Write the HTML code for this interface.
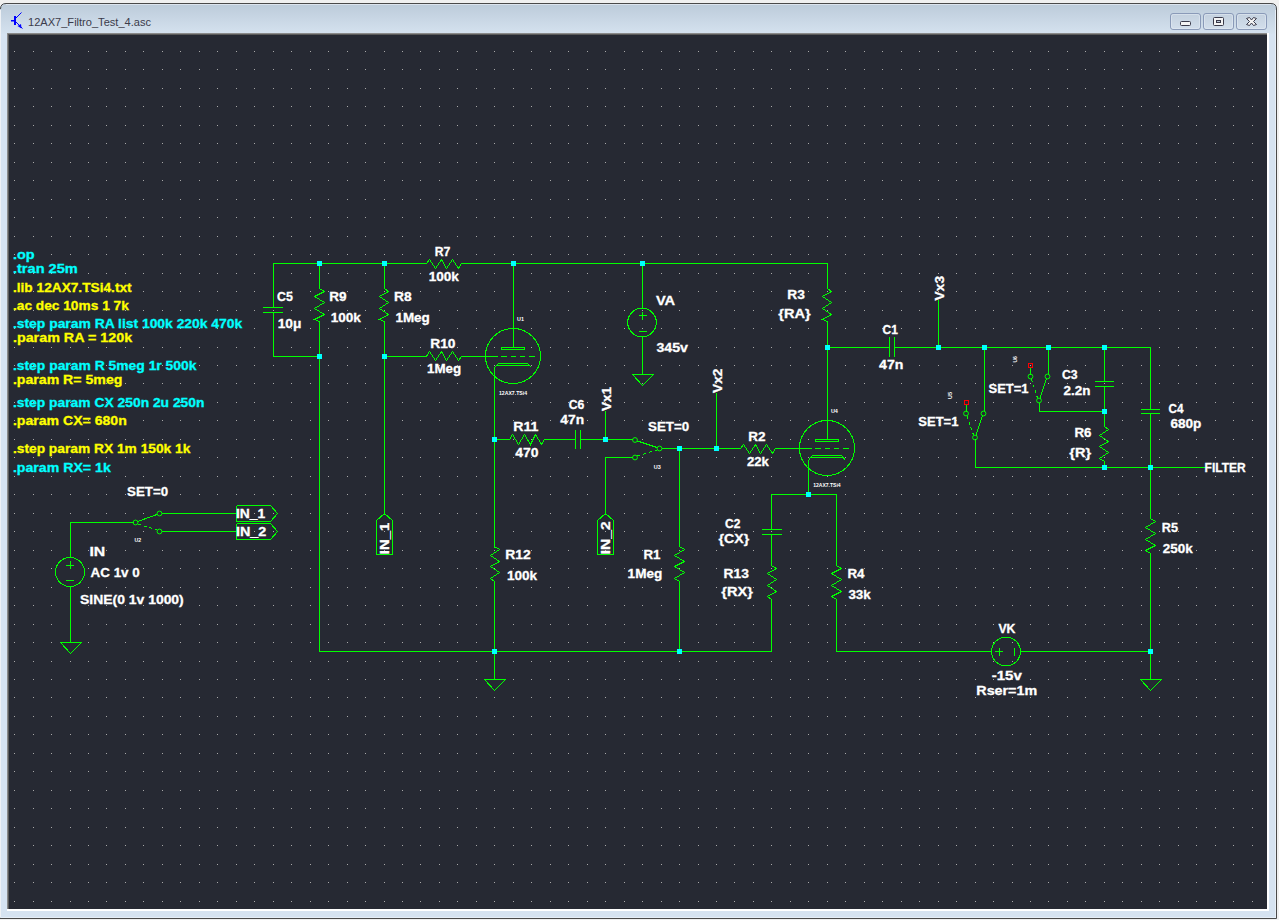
<!DOCTYPE html>
<html><head><meta charset="utf-8"><title>12AX7_Filtro_Test_4.asc</title><style>html,body{margin:0;padding:0;width:1279px;height:920px;overflow:hidden;background:#f0f0f0}</style></head><body>
<svg width="1279" height="920" viewBox="0 0 1279 920" style="position:absolute;left:0;top:0">
<defs><linearGradient id="tb" x1="0" y1="0" x2="0" y2="1"><stop offset="0" stop-color="#bccbda"/><stop offset="1" stop-color="#d5e2ef"/></linearGradient><linearGradient id="bt" x1="0" y1="0" x2="0" y2="1"><stop offset="0" stop-color="#c3d0de"/><stop offset="1" stop-color="#d3dfec"/></linearGradient></defs>
<rect x="0" y="0" width="1279" height="920" fill="#f0f0f0"/>
<path d="M0,9 Q0,3 6,3 L1271,3 Q1277,3 1277,9 L1277,919 L0,919 Z" fill="#d6e3f1"/>
<path d="M0,10 Q1,4 7,4 L1270,4 Q1276,4 1276,10 L1276,34 L0,34 Z" fill="url(#tb)"/>
<rect x="6" y="4" width="1265" height="1" fill="#dce4ee"/>
<rect x="1275" y="10" width="1" height="908" fill="#e6eef7"/>
<rect x="1" y="917" width="1274" height="1" fill="#e6eef7"/>
<rect x="0" y="10" width="1" height="907" fill="#eef1f5"/>
<path d="M0.5,9 Q0.5,3.5 6,3.5 L1271,3.5 Q1276.5,3.5 1276.5,9 L1276.5,918.5 L0,918.5" fill="none" stroke="#4a4a4a" stroke-width="1"/>
<rect x="7" y="33" width="1262" height="878" fill="#ffffff"/>
<rect x="7" y="33" width="1260" height="876" fill="#8a8a8a"/>
<rect x="8" y="34" width="1259" height="875" fill="#5a5a5a"/>
<rect x="9" y="35" width="1258" height="874" fill="#262933"/>
<text x="28" y="26" font-family="Liberation Sans" font-size="11.3" fill="#3b3b4b" textLength="123" lengthAdjust="spacingAndGlyphs">12AX7_Filtro_Test_4.asc</text>
<g fill="#0000ff" stroke="none"><rect x="11" y="20" width="3" height="1.5"/><rect x="14" y="16" width="2" height="9"/></g>
<g stroke="#0000ff" stroke-width="1" fill="none"><path d="M16,18 L21.5,12.5"/><path d="M16,22 L22.5,28.5"/></g>
<path d="M17.5,26 L21,24 L21.5,28.5 Z" fill="#0000ff"/>
<rect x="1170.5" y="13.5" width="30" height="16" rx="2.5" fill="url(#bt)" stroke="#8a9ab8" stroke-width="1"/>
<rect x="1171.5" y="14.5" width="28" height="14" rx="2" fill="none" stroke="#e4ecf5" stroke-width="0.8" opacity="0.7"/>
<rect x="1203.5" y="13.5" width="30" height="16" rx="2.5" fill="url(#bt)" stroke="#8a9ab8" stroke-width="1"/>
<rect x="1204.5" y="14.5" width="28" height="14" rx="2" fill="none" stroke="#e4ecf5" stroke-width="0.8" opacity="0.7"/>
<rect x="1236.5" y="13.5" width="30" height="16" rx="2.5" fill="url(#bt)" stroke="#8a9ab8" stroke-width="1"/>
<rect x="1237.5" y="14.5" width="28" height="14" rx="2" fill="none" stroke="#e4ecf5" stroke-width="0.8" opacity="0.7"/>
<rect x="1180.5" y="21.5" width="10" height="4" rx="1" fill="#f4f4f4" stroke="#3a3a4a" stroke-width="1"/>
<rect x="1213.5" y="17.5" width="10" height="8" rx="1" fill="#f4f4f4" stroke="#3a3a4a" stroke-width="1"/><rect x="1216" y="20" width="5" height="3" fill="#3a3a4a"/><rect x="1217" y="21" width="3" height="1" fill="#bcc8d8"/>
<path d="M1246.5,18.5 L1249.5,17.5 L1251.5,20 L1253.5,17.5 L1256.5,18.5 L1253.5,21.5 L1256.5,24.5 L1253.5,25.5 L1251.5,23 L1249.5,25.5 L1246.5,24.5 L1249.5,21.5 Z" fill="#f4f4f4" stroke="#3a3a4a" stroke-width="1" stroke-linejoin="round"/>
<path d="M14 51h1v1h-1zM14 69h1v1h-1zM14 88h1v1h-1zM14 106h1v1h-1zM14 125h1v1h-1zM14 143h1v1h-1zM14 162h1v1h-1zM14 180h1v1h-1zM14 199h1v1h-1zM14 217h1v1h-1zM14 236h1v1h-1zM14 254h1v1h-1zM14 273h1v1h-1zM14 291h1v1h-1zM14 310h1v1h-1zM14 328h1v1h-1zM14 347h1v1h-1zM14 365h1v1h-1zM14 383h1v1h-1zM14 402h1v1h-1zM14 420h1v1h-1zM14 439h1v1h-1zM14 457h1v1h-1zM14 476h1v1h-1zM14 494h1v1h-1zM14 513h1v1h-1zM14 531h1v1h-1zM14 550h1v1h-1zM14 568h1v1h-1zM14 587h1v1h-1zM14 605h1v1h-1zM14 624h1v1h-1zM14 642h1v1h-1zM14 661h1v1h-1zM14 679h1v1h-1zM14 697h1v1h-1zM14 716h1v1h-1zM14 734h1v1h-1zM14 753h1v1h-1zM14 771h1v1h-1zM14 790h1v1h-1zM14 808h1v1h-1zM14 827h1v1h-1zM14 845h1v1h-1zM14 864h1v1h-1zM14 882h1v1h-1zM14 901h1v1h-1zM33 51h1v1h-1zM33 69h1v1h-1zM33 88h1v1h-1zM33 106h1v1h-1zM33 125h1v1h-1zM33 143h1v1h-1zM33 162h1v1h-1zM33 180h1v1h-1zM33 199h1v1h-1zM33 217h1v1h-1zM33 236h1v1h-1zM33 254h1v1h-1zM33 273h1v1h-1zM33 291h1v1h-1zM33 310h1v1h-1zM33 328h1v1h-1zM33 347h1v1h-1zM33 365h1v1h-1zM33 383h1v1h-1zM33 402h1v1h-1zM33 420h1v1h-1zM33 439h1v1h-1zM33 457h1v1h-1zM33 476h1v1h-1zM33 494h1v1h-1zM33 513h1v1h-1zM33 531h1v1h-1zM33 550h1v1h-1zM33 568h1v1h-1zM33 587h1v1h-1zM33 605h1v1h-1zM33 624h1v1h-1zM33 642h1v1h-1zM33 661h1v1h-1zM33 679h1v1h-1zM33 697h1v1h-1zM33 716h1v1h-1zM33 734h1v1h-1zM33 753h1v1h-1zM33 771h1v1h-1zM33 790h1v1h-1zM33 808h1v1h-1zM33 827h1v1h-1zM33 845h1v1h-1zM33 864h1v1h-1zM33 882h1v1h-1zM33 901h1v1h-1zM51 51h1v1h-1zM51 69h1v1h-1zM51 88h1v1h-1zM51 106h1v1h-1zM51 125h1v1h-1zM51 143h1v1h-1zM51 162h1v1h-1zM51 180h1v1h-1zM51 199h1v1h-1zM51 217h1v1h-1zM51 236h1v1h-1zM51 254h1v1h-1zM51 273h1v1h-1zM51 291h1v1h-1zM51 310h1v1h-1zM51 328h1v1h-1zM51 347h1v1h-1zM51 365h1v1h-1zM51 383h1v1h-1zM51 402h1v1h-1zM51 420h1v1h-1zM51 439h1v1h-1zM51 457h1v1h-1zM51 476h1v1h-1zM51 494h1v1h-1zM51 513h1v1h-1zM51 531h1v1h-1zM51 550h1v1h-1zM51 568h1v1h-1zM51 587h1v1h-1zM51 605h1v1h-1zM51 624h1v1h-1zM51 642h1v1h-1zM51 661h1v1h-1zM51 679h1v1h-1zM51 697h1v1h-1zM51 716h1v1h-1zM51 734h1v1h-1zM51 753h1v1h-1zM51 771h1v1h-1zM51 790h1v1h-1zM51 808h1v1h-1zM51 827h1v1h-1zM51 845h1v1h-1zM51 864h1v1h-1zM51 882h1v1h-1zM51 901h1v1h-1zM70 51h1v1h-1zM70 69h1v1h-1zM70 88h1v1h-1zM70 106h1v1h-1zM70 125h1v1h-1zM70 143h1v1h-1zM70 162h1v1h-1zM70 180h1v1h-1zM70 199h1v1h-1zM70 217h1v1h-1zM70 236h1v1h-1zM70 254h1v1h-1zM70 273h1v1h-1zM70 291h1v1h-1zM70 310h1v1h-1zM70 328h1v1h-1zM70 347h1v1h-1zM70 365h1v1h-1zM70 383h1v1h-1zM70 402h1v1h-1zM70 420h1v1h-1zM70 439h1v1h-1zM70 457h1v1h-1zM70 476h1v1h-1zM70 494h1v1h-1zM70 513h1v1h-1zM70 531h1v1h-1zM70 550h1v1h-1zM70 568h1v1h-1zM70 587h1v1h-1zM70 605h1v1h-1zM70 624h1v1h-1zM70 642h1v1h-1zM70 661h1v1h-1zM70 679h1v1h-1zM70 697h1v1h-1zM70 716h1v1h-1zM70 734h1v1h-1zM70 753h1v1h-1zM70 771h1v1h-1zM70 790h1v1h-1zM70 808h1v1h-1zM70 827h1v1h-1zM70 845h1v1h-1zM70 864h1v1h-1zM70 882h1v1h-1zM70 901h1v1h-1zM88 51h1v1h-1zM88 69h1v1h-1zM88 88h1v1h-1zM88 106h1v1h-1zM88 125h1v1h-1zM88 143h1v1h-1zM88 162h1v1h-1zM88 180h1v1h-1zM88 199h1v1h-1zM88 217h1v1h-1zM88 236h1v1h-1zM88 254h1v1h-1zM88 273h1v1h-1zM88 291h1v1h-1zM88 310h1v1h-1zM88 328h1v1h-1zM88 347h1v1h-1zM88 365h1v1h-1zM88 383h1v1h-1zM88 402h1v1h-1zM88 420h1v1h-1zM88 439h1v1h-1zM88 457h1v1h-1zM88 476h1v1h-1zM88 494h1v1h-1zM88 513h1v1h-1zM88 531h1v1h-1zM88 550h1v1h-1zM88 568h1v1h-1zM88 587h1v1h-1zM88 605h1v1h-1zM88 624h1v1h-1zM88 642h1v1h-1zM88 661h1v1h-1zM88 679h1v1h-1zM88 697h1v1h-1zM88 716h1v1h-1zM88 734h1v1h-1zM88 753h1v1h-1zM88 771h1v1h-1zM88 790h1v1h-1zM88 808h1v1h-1zM88 827h1v1h-1zM88 845h1v1h-1zM88 864h1v1h-1zM88 882h1v1h-1zM88 901h1v1h-1zM106 51h1v1h-1zM106 69h1v1h-1zM106 88h1v1h-1zM106 106h1v1h-1zM106 125h1v1h-1zM106 143h1v1h-1zM106 162h1v1h-1zM106 180h1v1h-1zM106 199h1v1h-1zM106 217h1v1h-1zM106 236h1v1h-1zM106 254h1v1h-1zM106 273h1v1h-1zM106 291h1v1h-1zM106 310h1v1h-1zM106 328h1v1h-1zM106 347h1v1h-1zM106 365h1v1h-1zM106 383h1v1h-1zM106 402h1v1h-1zM106 420h1v1h-1zM106 439h1v1h-1zM106 457h1v1h-1zM106 476h1v1h-1zM106 494h1v1h-1zM106 513h1v1h-1zM106 531h1v1h-1zM106 550h1v1h-1zM106 568h1v1h-1zM106 587h1v1h-1zM106 605h1v1h-1zM106 624h1v1h-1zM106 642h1v1h-1zM106 661h1v1h-1zM106 679h1v1h-1zM106 697h1v1h-1zM106 716h1v1h-1zM106 734h1v1h-1zM106 753h1v1h-1zM106 771h1v1h-1zM106 790h1v1h-1zM106 808h1v1h-1zM106 827h1v1h-1zM106 845h1v1h-1zM106 864h1v1h-1zM106 882h1v1h-1zM106 901h1v1h-1zM125 51h1v1h-1zM125 69h1v1h-1zM125 88h1v1h-1zM125 106h1v1h-1zM125 125h1v1h-1zM125 143h1v1h-1zM125 162h1v1h-1zM125 180h1v1h-1zM125 199h1v1h-1zM125 217h1v1h-1zM125 236h1v1h-1zM125 254h1v1h-1zM125 273h1v1h-1zM125 291h1v1h-1zM125 310h1v1h-1zM125 328h1v1h-1zM125 347h1v1h-1zM125 365h1v1h-1zM125 383h1v1h-1zM125 402h1v1h-1zM125 420h1v1h-1zM125 439h1v1h-1zM125 457h1v1h-1zM125 476h1v1h-1zM125 494h1v1h-1zM125 513h1v1h-1zM125 531h1v1h-1zM125 550h1v1h-1zM125 568h1v1h-1zM125 587h1v1h-1zM125 605h1v1h-1zM125 624h1v1h-1zM125 642h1v1h-1zM125 661h1v1h-1zM125 679h1v1h-1zM125 697h1v1h-1zM125 716h1v1h-1zM125 734h1v1h-1zM125 753h1v1h-1zM125 771h1v1h-1zM125 790h1v1h-1zM125 808h1v1h-1zM125 827h1v1h-1zM125 845h1v1h-1zM125 864h1v1h-1zM125 882h1v1h-1zM125 901h1v1h-1zM143 51h1v1h-1zM143 69h1v1h-1zM143 88h1v1h-1zM143 106h1v1h-1zM143 125h1v1h-1zM143 143h1v1h-1zM143 162h1v1h-1zM143 180h1v1h-1zM143 199h1v1h-1zM143 217h1v1h-1zM143 236h1v1h-1zM143 254h1v1h-1zM143 273h1v1h-1zM143 291h1v1h-1zM143 310h1v1h-1zM143 328h1v1h-1zM143 347h1v1h-1zM143 365h1v1h-1zM143 383h1v1h-1zM143 402h1v1h-1zM143 420h1v1h-1zM143 439h1v1h-1zM143 457h1v1h-1zM143 476h1v1h-1zM143 494h1v1h-1zM143 513h1v1h-1zM143 531h1v1h-1zM143 550h1v1h-1zM143 568h1v1h-1zM143 587h1v1h-1zM143 605h1v1h-1zM143 624h1v1h-1zM143 642h1v1h-1zM143 661h1v1h-1zM143 679h1v1h-1zM143 697h1v1h-1zM143 716h1v1h-1zM143 734h1v1h-1zM143 753h1v1h-1zM143 771h1v1h-1zM143 790h1v1h-1zM143 808h1v1h-1zM143 827h1v1h-1zM143 845h1v1h-1zM143 864h1v1h-1zM143 882h1v1h-1zM143 901h1v1h-1zM162 51h1v1h-1zM162 69h1v1h-1zM162 88h1v1h-1zM162 106h1v1h-1zM162 125h1v1h-1zM162 143h1v1h-1zM162 162h1v1h-1zM162 180h1v1h-1zM162 199h1v1h-1zM162 217h1v1h-1zM162 236h1v1h-1zM162 254h1v1h-1zM162 273h1v1h-1zM162 291h1v1h-1zM162 310h1v1h-1zM162 328h1v1h-1zM162 347h1v1h-1zM162 365h1v1h-1zM162 383h1v1h-1zM162 402h1v1h-1zM162 420h1v1h-1zM162 439h1v1h-1zM162 457h1v1h-1zM162 476h1v1h-1zM162 494h1v1h-1zM162 513h1v1h-1zM162 531h1v1h-1zM162 550h1v1h-1zM162 568h1v1h-1zM162 587h1v1h-1zM162 605h1v1h-1zM162 624h1v1h-1zM162 642h1v1h-1zM162 661h1v1h-1zM162 679h1v1h-1zM162 697h1v1h-1zM162 716h1v1h-1zM162 734h1v1h-1zM162 753h1v1h-1zM162 771h1v1h-1zM162 790h1v1h-1zM162 808h1v1h-1zM162 827h1v1h-1zM162 845h1v1h-1zM162 864h1v1h-1zM162 882h1v1h-1zM162 901h1v1h-1zM180 51h1v1h-1zM180 69h1v1h-1zM180 88h1v1h-1zM180 106h1v1h-1zM180 125h1v1h-1zM180 143h1v1h-1zM180 162h1v1h-1zM180 180h1v1h-1zM180 199h1v1h-1zM180 217h1v1h-1zM180 236h1v1h-1zM180 254h1v1h-1zM180 273h1v1h-1zM180 291h1v1h-1zM180 310h1v1h-1zM180 328h1v1h-1zM180 347h1v1h-1zM180 365h1v1h-1zM180 383h1v1h-1zM180 402h1v1h-1zM180 420h1v1h-1zM180 439h1v1h-1zM180 457h1v1h-1zM180 476h1v1h-1zM180 494h1v1h-1zM180 513h1v1h-1zM180 531h1v1h-1zM180 550h1v1h-1zM180 568h1v1h-1zM180 587h1v1h-1zM180 605h1v1h-1zM180 624h1v1h-1zM180 642h1v1h-1zM180 661h1v1h-1zM180 679h1v1h-1zM180 697h1v1h-1zM180 716h1v1h-1zM180 734h1v1h-1zM180 753h1v1h-1zM180 771h1v1h-1zM180 790h1v1h-1zM180 808h1v1h-1zM180 827h1v1h-1zM180 845h1v1h-1zM180 864h1v1h-1zM180 882h1v1h-1zM180 901h1v1h-1zM199 51h1v1h-1zM199 69h1v1h-1zM199 88h1v1h-1zM199 106h1v1h-1zM199 125h1v1h-1zM199 143h1v1h-1zM199 162h1v1h-1zM199 180h1v1h-1zM199 199h1v1h-1zM199 217h1v1h-1zM199 236h1v1h-1zM199 254h1v1h-1zM199 273h1v1h-1zM199 291h1v1h-1zM199 310h1v1h-1zM199 328h1v1h-1zM199 347h1v1h-1zM199 365h1v1h-1zM199 383h1v1h-1zM199 402h1v1h-1zM199 420h1v1h-1zM199 439h1v1h-1zM199 457h1v1h-1zM199 476h1v1h-1zM199 494h1v1h-1zM199 513h1v1h-1zM199 531h1v1h-1zM199 550h1v1h-1zM199 568h1v1h-1zM199 587h1v1h-1zM199 605h1v1h-1zM199 624h1v1h-1zM199 642h1v1h-1zM199 661h1v1h-1zM199 679h1v1h-1zM199 697h1v1h-1zM199 716h1v1h-1zM199 734h1v1h-1zM199 753h1v1h-1zM199 771h1v1h-1zM199 790h1v1h-1zM199 808h1v1h-1zM199 827h1v1h-1zM199 845h1v1h-1zM199 864h1v1h-1zM199 882h1v1h-1zM199 901h1v1h-1zM217 51h1v1h-1zM217 69h1v1h-1zM217 88h1v1h-1zM217 106h1v1h-1zM217 125h1v1h-1zM217 143h1v1h-1zM217 162h1v1h-1zM217 180h1v1h-1zM217 199h1v1h-1zM217 217h1v1h-1zM217 236h1v1h-1zM217 254h1v1h-1zM217 273h1v1h-1zM217 291h1v1h-1zM217 310h1v1h-1zM217 328h1v1h-1zM217 347h1v1h-1zM217 365h1v1h-1zM217 383h1v1h-1zM217 402h1v1h-1zM217 420h1v1h-1zM217 439h1v1h-1zM217 457h1v1h-1zM217 476h1v1h-1zM217 494h1v1h-1zM217 513h1v1h-1zM217 531h1v1h-1zM217 550h1v1h-1zM217 568h1v1h-1zM217 587h1v1h-1zM217 605h1v1h-1zM217 624h1v1h-1zM217 642h1v1h-1zM217 661h1v1h-1zM217 679h1v1h-1zM217 697h1v1h-1zM217 716h1v1h-1zM217 734h1v1h-1zM217 753h1v1h-1zM217 771h1v1h-1zM217 790h1v1h-1zM217 808h1v1h-1zM217 827h1v1h-1zM217 845h1v1h-1zM217 864h1v1h-1zM217 882h1v1h-1zM217 901h1v1h-1zM236 51h1v1h-1zM236 69h1v1h-1zM236 88h1v1h-1zM236 106h1v1h-1zM236 125h1v1h-1zM236 143h1v1h-1zM236 162h1v1h-1zM236 180h1v1h-1zM236 199h1v1h-1zM236 217h1v1h-1zM236 236h1v1h-1zM236 254h1v1h-1zM236 273h1v1h-1zM236 291h1v1h-1zM236 310h1v1h-1zM236 328h1v1h-1zM236 347h1v1h-1zM236 365h1v1h-1zM236 383h1v1h-1zM236 402h1v1h-1zM236 420h1v1h-1zM236 439h1v1h-1zM236 457h1v1h-1zM236 476h1v1h-1zM236 494h1v1h-1zM236 513h1v1h-1zM236 531h1v1h-1zM236 550h1v1h-1zM236 568h1v1h-1zM236 587h1v1h-1zM236 605h1v1h-1zM236 624h1v1h-1zM236 642h1v1h-1zM236 661h1v1h-1zM236 679h1v1h-1zM236 697h1v1h-1zM236 716h1v1h-1zM236 734h1v1h-1zM236 753h1v1h-1zM236 771h1v1h-1zM236 790h1v1h-1zM236 808h1v1h-1zM236 827h1v1h-1zM236 845h1v1h-1zM236 864h1v1h-1zM236 882h1v1h-1zM236 901h1v1h-1zM254 51h1v1h-1zM254 69h1v1h-1zM254 88h1v1h-1zM254 106h1v1h-1zM254 125h1v1h-1zM254 143h1v1h-1zM254 162h1v1h-1zM254 180h1v1h-1zM254 199h1v1h-1zM254 217h1v1h-1zM254 236h1v1h-1zM254 254h1v1h-1zM254 273h1v1h-1zM254 291h1v1h-1zM254 310h1v1h-1zM254 328h1v1h-1zM254 347h1v1h-1zM254 365h1v1h-1zM254 383h1v1h-1zM254 402h1v1h-1zM254 420h1v1h-1zM254 439h1v1h-1zM254 457h1v1h-1zM254 476h1v1h-1zM254 494h1v1h-1zM254 513h1v1h-1zM254 531h1v1h-1zM254 550h1v1h-1zM254 568h1v1h-1zM254 587h1v1h-1zM254 605h1v1h-1zM254 624h1v1h-1zM254 642h1v1h-1zM254 661h1v1h-1zM254 679h1v1h-1zM254 697h1v1h-1zM254 716h1v1h-1zM254 734h1v1h-1zM254 753h1v1h-1zM254 771h1v1h-1zM254 790h1v1h-1zM254 808h1v1h-1zM254 827h1v1h-1zM254 845h1v1h-1zM254 864h1v1h-1zM254 882h1v1h-1zM254 901h1v1h-1zM273 51h1v1h-1zM273 69h1v1h-1zM273 88h1v1h-1zM273 106h1v1h-1zM273 125h1v1h-1zM273 143h1v1h-1zM273 162h1v1h-1zM273 180h1v1h-1zM273 199h1v1h-1zM273 217h1v1h-1zM273 236h1v1h-1zM273 254h1v1h-1zM273 273h1v1h-1zM273 291h1v1h-1zM273 310h1v1h-1zM273 328h1v1h-1zM273 347h1v1h-1zM273 365h1v1h-1zM273 383h1v1h-1zM273 402h1v1h-1zM273 420h1v1h-1zM273 439h1v1h-1zM273 457h1v1h-1zM273 476h1v1h-1zM273 494h1v1h-1zM273 513h1v1h-1zM273 531h1v1h-1zM273 550h1v1h-1zM273 568h1v1h-1zM273 587h1v1h-1zM273 605h1v1h-1zM273 624h1v1h-1zM273 642h1v1h-1zM273 661h1v1h-1zM273 679h1v1h-1zM273 697h1v1h-1zM273 716h1v1h-1zM273 734h1v1h-1zM273 753h1v1h-1zM273 771h1v1h-1zM273 790h1v1h-1zM273 808h1v1h-1zM273 827h1v1h-1zM273 845h1v1h-1zM273 864h1v1h-1zM273 882h1v1h-1zM273 901h1v1h-1zM291 51h1v1h-1zM291 69h1v1h-1zM291 88h1v1h-1zM291 106h1v1h-1zM291 125h1v1h-1zM291 143h1v1h-1zM291 162h1v1h-1zM291 180h1v1h-1zM291 199h1v1h-1zM291 217h1v1h-1zM291 236h1v1h-1zM291 254h1v1h-1zM291 273h1v1h-1zM291 291h1v1h-1zM291 310h1v1h-1zM291 328h1v1h-1zM291 347h1v1h-1zM291 365h1v1h-1zM291 383h1v1h-1zM291 402h1v1h-1zM291 420h1v1h-1zM291 439h1v1h-1zM291 457h1v1h-1zM291 476h1v1h-1zM291 494h1v1h-1zM291 513h1v1h-1zM291 531h1v1h-1zM291 550h1v1h-1zM291 568h1v1h-1zM291 587h1v1h-1zM291 605h1v1h-1zM291 624h1v1h-1zM291 642h1v1h-1zM291 661h1v1h-1zM291 679h1v1h-1zM291 697h1v1h-1zM291 716h1v1h-1zM291 734h1v1h-1zM291 753h1v1h-1zM291 771h1v1h-1zM291 790h1v1h-1zM291 808h1v1h-1zM291 827h1v1h-1zM291 845h1v1h-1zM291 864h1v1h-1zM291 882h1v1h-1zM291 901h1v1h-1zM310 51h1v1h-1zM310 69h1v1h-1zM310 88h1v1h-1zM310 106h1v1h-1zM310 125h1v1h-1zM310 143h1v1h-1zM310 162h1v1h-1zM310 180h1v1h-1zM310 199h1v1h-1zM310 217h1v1h-1zM310 236h1v1h-1zM310 254h1v1h-1zM310 273h1v1h-1zM310 291h1v1h-1zM310 310h1v1h-1zM310 328h1v1h-1zM310 347h1v1h-1zM310 365h1v1h-1zM310 383h1v1h-1zM310 402h1v1h-1zM310 420h1v1h-1zM310 439h1v1h-1zM310 457h1v1h-1zM310 476h1v1h-1zM310 494h1v1h-1zM310 513h1v1h-1zM310 531h1v1h-1zM310 550h1v1h-1zM310 568h1v1h-1zM310 587h1v1h-1zM310 605h1v1h-1zM310 624h1v1h-1zM310 642h1v1h-1zM310 661h1v1h-1zM310 679h1v1h-1zM310 697h1v1h-1zM310 716h1v1h-1zM310 734h1v1h-1zM310 753h1v1h-1zM310 771h1v1h-1zM310 790h1v1h-1zM310 808h1v1h-1zM310 827h1v1h-1zM310 845h1v1h-1zM310 864h1v1h-1zM310 882h1v1h-1zM310 901h1v1h-1zM328 51h1v1h-1zM328 69h1v1h-1zM328 88h1v1h-1zM328 106h1v1h-1zM328 125h1v1h-1zM328 143h1v1h-1zM328 162h1v1h-1zM328 180h1v1h-1zM328 199h1v1h-1zM328 217h1v1h-1zM328 236h1v1h-1zM328 254h1v1h-1zM328 273h1v1h-1zM328 291h1v1h-1zM328 310h1v1h-1zM328 328h1v1h-1zM328 347h1v1h-1zM328 365h1v1h-1zM328 383h1v1h-1zM328 402h1v1h-1zM328 420h1v1h-1zM328 439h1v1h-1zM328 457h1v1h-1zM328 476h1v1h-1zM328 494h1v1h-1zM328 513h1v1h-1zM328 531h1v1h-1zM328 550h1v1h-1zM328 568h1v1h-1zM328 587h1v1h-1zM328 605h1v1h-1zM328 624h1v1h-1zM328 642h1v1h-1zM328 661h1v1h-1zM328 679h1v1h-1zM328 697h1v1h-1zM328 716h1v1h-1zM328 734h1v1h-1zM328 753h1v1h-1zM328 771h1v1h-1zM328 790h1v1h-1zM328 808h1v1h-1zM328 827h1v1h-1zM328 845h1v1h-1zM328 864h1v1h-1zM328 882h1v1h-1zM328 901h1v1h-1zM347 51h1v1h-1zM347 69h1v1h-1zM347 88h1v1h-1zM347 106h1v1h-1zM347 125h1v1h-1zM347 143h1v1h-1zM347 162h1v1h-1zM347 180h1v1h-1zM347 199h1v1h-1zM347 217h1v1h-1zM347 236h1v1h-1zM347 254h1v1h-1zM347 273h1v1h-1zM347 291h1v1h-1zM347 310h1v1h-1zM347 328h1v1h-1zM347 347h1v1h-1zM347 365h1v1h-1zM347 383h1v1h-1zM347 402h1v1h-1zM347 420h1v1h-1zM347 439h1v1h-1zM347 457h1v1h-1zM347 476h1v1h-1zM347 494h1v1h-1zM347 513h1v1h-1zM347 531h1v1h-1zM347 550h1v1h-1zM347 568h1v1h-1zM347 587h1v1h-1zM347 605h1v1h-1zM347 624h1v1h-1zM347 642h1v1h-1zM347 661h1v1h-1zM347 679h1v1h-1zM347 697h1v1h-1zM347 716h1v1h-1zM347 734h1v1h-1zM347 753h1v1h-1zM347 771h1v1h-1zM347 790h1v1h-1zM347 808h1v1h-1zM347 827h1v1h-1zM347 845h1v1h-1zM347 864h1v1h-1zM347 882h1v1h-1zM347 901h1v1h-1zM365 51h1v1h-1zM365 69h1v1h-1zM365 88h1v1h-1zM365 106h1v1h-1zM365 125h1v1h-1zM365 143h1v1h-1zM365 162h1v1h-1zM365 180h1v1h-1zM365 199h1v1h-1zM365 217h1v1h-1zM365 236h1v1h-1zM365 254h1v1h-1zM365 273h1v1h-1zM365 291h1v1h-1zM365 310h1v1h-1zM365 328h1v1h-1zM365 347h1v1h-1zM365 365h1v1h-1zM365 383h1v1h-1zM365 402h1v1h-1zM365 420h1v1h-1zM365 439h1v1h-1zM365 457h1v1h-1zM365 476h1v1h-1zM365 494h1v1h-1zM365 513h1v1h-1zM365 531h1v1h-1zM365 550h1v1h-1zM365 568h1v1h-1zM365 587h1v1h-1zM365 605h1v1h-1zM365 624h1v1h-1zM365 642h1v1h-1zM365 661h1v1h-1zM365 679h1v1h-1zM365 697h1v1h-1zM365 716h1v1h-1zM365 734h1v1h-1zM365 753h1v1h-1zM365 771h1v1h-1zM365 790h1v1h-1zM365 808h1v1h-1zM365 827h1v1h-1zM365 845h1v1h-1zM365 864h1v1h-1zM365 882h1v1h-1zM365 901h1v1h-1zM384 51h1v1h-1zM384 69h1v1h-1zM384 88h1v1h-1zM384 106h1v1h-1zM384 125h1v1h-1zM384 143h1v1h-1zM384 162h1v1h-1zM384 180h1v1h-1zM384 199h1v1h-1zM384 217h1v1h-1zM384 236h1v1h-1zM384 254h1v1h-1zM384 273h1v1h-1zM384 291h1v1h-1zM384 310h1v1h-1zM384 328h1v1h-1zM384 347h1v1h-1zM384 365h1v1h-1zM384 383h1v1h-1zM384 402h1v1h-1zM384 420h1v1h-1zM384 439h1v1h-1zM384 457h1v1h-1zM384 476h1v1h-1zM384 494h1v1h-1zM384 513h1v1h-1zM384 531h1v1h-1zM384 550h1v1h-1zM384 568h1v1h-1zM384 587h1v1h-1zM384 605h1v1h-1zM384 624h1v1h-1zM384 642h1v1h-1zM384 661h1v1h-1zM384 679h1v1h-1zM384 697h1v1h-1zM384 716h1v1h-1zM384 734h1v1h-1zM384 753h1v1h-1zM384 771h1v1h-1zM384 790h1v1h-1zM384 808h1v1h-1zM384 827h1v1h-1zM384 845h1v1h-1zM384 864h1v1h-1zM384 882h1v1h-1zM384 901h1v1h-1zM402 51h1v1h-1zM402 69h1v1h-1zM402 88h1v1h-1zM402 106h1v1h-1zM402 125h1v1h-1zM402 143h1v1h-1zM402 162h1v1h-1zM402 180h1v1h-1zM402 199h1v1h-1zM402 217h1v1h-1zM402 236h1v1h-1zM402 254h1v1h-1zM402 273h1v1h-1zM402 291h1v1h-1zM402 310h1v1h-1zM402 328h1v1h-1zM402 347h1v1h-1zM402 365h1v1h-1zM402 383h1v1h-1zM402 402h1v1h-1zM402 420h1v1h-1zM402 439h1v1h-1zM402 457h1v1h-1zM402 476h1v1h-1zM402 494h1v1h-1zM402 513h1v1h-1zM402 531h1v1h-1zM402 550h1v1h-1zM402 568h1v1h-1zM402 587h1v1h-1zM402 605h1v1h-1zM402 624h1v1h-1zM402 642h1v1h-1zM402 661h1v1h-1zM402 679h1v1h-1zM402 697h1v1h-1zM402 716h1v1h-1zM402 734h1v1h-1zM402 753h1v1h-1zM402 771h1v1h-1zM402 790h1v1h-1zM402 808h1v1h-1zM402 827h1v1h-1zM402 845h1v1h-1zM402 864h1v1h-1zM402 882h1v1h-1zM402 901h1v1h-1zM420 51h1v1h-1zM420 69h1v1h-1zM420 88h1v1h-1zM420 106h1v1h-1zM420 125h1v1h-1zM420 143h1v1h-1zM420 162h1v1h-1zM420 180h1v1h-1zM420 199h1v1h-1zM420 217h1v1h-1zM420 236h1v1h-1zM420 254h1v1h-1zM420 273h1v1h-1zM420 291h1v1h-1zM420 310h1v1h-1zM420 328h1v1h-1zM420 347h1v1h-1zM420 365h1v1h-1zM420 383h1v1h-1zM420 402h1v1h-1zM420 420h1v1h-1zM420 439h1v1h-1zM420 457h1v1h-1zM420 476h1v1h-1zM420 494h1v1h-1zM420 513h1v1h-1zM420 531h1v1h-1zM420 550h1v1h-1zM420 568h1v1h-1zM420 587h1v1h-1zM420 605h1v1h-1zM420 624h1v1h-1zM420 642h1v1h-1zM420 661h1v1h-1zM420 679h1v1h-1zM420 697h1v1h-1zM420 716h1v1h-1zM420 734h1v1h-1zM420 753h1v1h-1zM420 771h1v1h-1zM420 790h1v1h-1zM420 808h1v1h-1zM420 827h1v1h-1zM420 845h1v1h-1zM420 864h1v1h-1zM420 882h1v1h-1zM420 901h1v1h-1zM439 51h1v1h-1zM439 69h1v1h-1zM439 88h1v1h-1zM439 106h1v1h-1zM439 125h1v1h-1zM439 143h1v1h-1zM439 162h1v1h-1zM439 180h1v1h-1zM439 199h1v1h-1zM439 217h1v1h-1zM439 236h1v1h-1zM439 254h1v1h-1zM439 273h1v1h-1zM439 291h1v1h-1zM439 310h1v1h-1zM439 328h1v1h-1zM439 347h1v1h-1zM439 365h1v1h-1zM439 383h1v1h-1zM439 402h1v1h-1zM439 420h1v1h-1zM439 439h1v1h-1zM439 457h1v1h-1zM439 476h1v1h-1zM439 494h1v1h-1zM439 513h1v1h-1zM439 531h1v1h-1zM439 550h1v1h-1zM439 568h1v1h-1zM439 587h1v1h-1zM439 605h1v1h-1zM439 624h1v1h-1zM439 642h1v1h-1zM439 661h1v1h-1zM439 679h1v1h-1zM439 697h1v1h-1zM439 716h1v1h-1zM439 734h1v1h-1zM439 753h1v1h-1zM439 771h1v1h-1zM439 790h1v1h-1zM439 808h1v1h-1zM439 827h1v1h-1zM439 845h1v1h-1zM439 864h1v1h-1zM439 882h1v1h-1zM439 901h1v1h-1zM457 51h1v1h-1zM457 69h1v1h-1zM457 88h1v1h-1zM457 106h1v1h-1zM457 125h1v1h-1zM457 143h1v1h-1zM457 162h1v1h-1zM457 180h1v1h-1zM457 199h1v1h-1zM457 217h1v1h-1zM457 236h1v1h-1zM457 254h1v1h-1zM457 273h1v1h-1zM457 291h1v1h-1zM457 310h1v1h-1zM457 328h1v1h-1zM457 347h1v1h-1zM457 365h1v1h-1zM457 383h1v1h-1zM457 402h1v1h-1zM457 420h1v1h-1zM457 439h1v1h-1zM457 457h1v1h-1zM457 476h1v1h-1zM457 494h1v1h-1zM457 513h1v1h-1zM457 531h1v1h-1zM457 550h1v1h-1zM457 568h1v1h-1zM457 587h1v1h-1zM457 605h1v1h-1zM457 624h1v1h-1zM457 642h1v1h-1zM457 661h1v1h-1zM457 679h1v1h-1zM457 697h1v1h-1zM457 716h1v1h-1zM457 734h1v1h-1zM457 753h1v1h-1zM457 771h1v1h-1zM457 790h1v1h-1zM457 808h1v1h-1zM457 827h1v1h-1zM457 845h1v1h-1zM457 864h1v1h-1zM457 882h1v1h-1zM457 901h1v1h-1zM476 51h1v1h-1zM476 69h1v1h-1zM476 88h1v1h-1zM476 106h1v1h-1zM476 125h1v1h-1zM476 143h1v1h-1zM476 162h1v1h-1zM476 180h1v1h-1zM476 199h1v1h-1zM476 217h1v1h-1zM476 236h1v1h-1zM476 254h1v1h-1zM476 273h1v1h-1zM476 291h1v1h-1zM476 310h1v1h-1zM476 328h1v1h-1zM476 347h1v1h-1zM476 365h1v1h-1zM476 383h1v1h-1zM476 402h1v1h-1zM476 420h1v1h-1zM476 439h1v1h-1zM476 457h1v1h-1zM476 476h1v1h-1zM476 494h1v1h-1zM476 513h1v1h-1zM476 531h1v1h-1zM476 550h1v1h-1zM476 568h1v1h-1zM476 587h1v1h-1zM476 605h1v1h-1zM476 624h1v1h-1zM476 642h1v1h-1zM476 661h1v1h-1zM476 679h1v1h-1zM476 697h1v1h-1zM476 716h1v1h-1zM476 734h1v1h-1zM476 753h1v1h-1zM476 771h1v1h-1zM476 790h1v1h-1zM476 808h1v1h-1zM476 827h1v1h-1zM476 845h1v1h-1zM476 864h1v1h-1zM476 882h1v1h-1zM476 901h1v1h-1zM494 51h1v1h-1zM494 69h1v1h-1zM494 88h1v1h-1zM494 106h1v1h-1zM494 125h1v1h-1zM494 143h1v1h-1zM494 162h1v1h-1zM494 180h1v1h-1zM494 199h1v1h-1zM494 217h1v1h-1zM494 236h1v1h-1zM494 254h1v1h-1zM494 273h1v1h-1zM494 291h1v1h-1zM494 310h1v1h-1zM494 328h1v1h-1zM494 347h1v1h-1zM494 365h1v1h-1zM494 383h1v1h-1zM494 402h1v1h-1zM494 420h1v1h-1zM494 439h1v1h-1zM494 457h1v1h-1zM494 476h1v1h-1zM494 494h1v1h-1zM494 513h1v1h-1zM494 531h1v1h-1zM494 550h1v1h-1zM494 568h1v1h-1zM494 587h1v1h-1zM494 605h1v1h-1zM494 624h1v1h-1zM494 642h1v1h-1zM494 661h1v1h-1zM494 679h1v1h-1zM494 697h1v1h-1zM494 716h1v1h-1zM494 734h1v1h-1zM494 753h1v1h-1zM494 771h1v1h-1zM494 790h1v1h-1zM494 808h1v1h-1zM494 827h1v1h-1zM494 845h1v1h-1zM494 864h1v1h-1zM494 882h1v1h-1zM494 901h1v1h-1zM513 51h1v1h-1zM513 69h1v1h-1zM513 88h1v1h-1zM513 106h1v1h-1zM513 125h1v1h-1zM513 143h1v1h-1zM513 162h1v1h-1zM513 180h1v1h-1zM513 199h1v1h-1zM513 217h1v1h-1zM513 236h1v1h-1zM513 254h1v1h-1zM513 273h1v1h-1zM513 291h1v1h-1zM513 310h1v1h-1zM513 328h1v1h-1zM513 347h1v1h-1zM513 365h1v1h-1zM513 383h1v1h-1zM513 402h1v1h-1zM513 420h1v1h-1zM513 439h1v1h-1zM513 457h1v1h-1zM513 476h1v1h-1zM513 494h1v1h-1zM513 513h1v1h-1zM513 531h1v1h-1zM513 550h1v1h-1zM513 568h1v1h-1zM513 587h1v1h-1zM513 605h1v1h-1zM513 624h1v1h-1zM513 642h1v1h-1zM513 661h1v1h-1zM513 679h1v1h-1zM513 697h1v1h-1zM513 716h1v1h-1zM513 734h1v1h-1zM513 753h1v1h-1zM513 771h1v1h-1zM513 790h1v1h-1zM513 808h1v1h-1zM513 827h1v1h-1zM513 845h1v1h-1zM513 864h1v1h-1zM513 882h1v1h-1zM513 901h1v1h-1zM531 51h1v1h-1zM531 69h1v1h-1zM531 88h1v1h-1zM531 106h1v1h-1zM531 125h1v1h-1zM531 143h1v1h-1zM531 162h1v1h-1zM531 180h1v1h-1zM531 199h1v1h-1zM531 217h1v1h-1zM531 236h1v1h-1zM531 254h1v1h-1zM531 273h1v1h-1zM531 291h1v1h-1zM531 310h1v1h-1zM531 328h1v1h-1zM531 347h1v1h-1zM531 365h1v1h-1zM531 383h1v1h-1zM531 402h1v1h-1zM531 420h1v1h-1zM531 439h1v1h-1zM531 457h1v1h-1zM531 476h1v1h-1zM531 494h1v1h-1zM531 513h1v1h-1zM531 531h1v1h-1zM531 550h1v1h-1zM531 568h1v1h-1zM531 587h1v1h-1zM531 605h1v1h-1zM531 624h1v1h-1zM531 642h1v1h-1zM531 661h1v1h-1zM531 679h1v1h-1zM531 697h1v1h-1zM531 716h1v1h-1zM531 734h1v1h-1zM531 753h1v1h-1zM531 771h1v1h-1zM531 790h1v1h-1zM531 808h1v1h-1zM531 827h1v1h-1zM531 845h1v1h-1zM531 864h1v1h-1zM531 882h1v1h-1zM531 901h1v1h-1zM550 51h1v1h-1zM550 69h1v1h-1zM550 88h1v1h-1zM550 106h1v1h-1zM550 125h1v1h-1zM550 143h1v1h-1zM550 162h1v1h-1zM550 180h1v1h-1zM550 199h1v1h-1zM550 217h1v1h-1zM550 236h1v1h-1zM550 254h1v1h-1zM550 273h1v1h-1zM550 291h1v1h-1zM550 310h1v1h-1zM550 328h1v1h-1zM550 347h1v1h-1zM550 365h1v1h-1zM550 383h1v1h-1zM550 402h1v1h-1zM550 420h1v1h-1zM550 439h1v1h-1zM550 457h1v1h-1zM550 476h1v1h-1zM550 494h1v1h-1zM550 513h1v1h-1zM550 531h1v1h-1zM550 550h1v1h-1zM550 568h1v1h-1zM550 587h1v1h-1zM550 605h1v1h-1zM550 624h1v1h-1zM550 642h1v1h-1zM550 661h1v1h-1zM550 679h1v1h-1zM550 697h1v1h-1zM550 716h1v1h-1zM550 734h1v1h-1zM550 753h1v1h-1zM550 771h1v1h-1zM550 790h1v1h-1zM550 808h1v1h-1zM550 827h1v1h-1zM550 845h1v1h-1zM550 864h1v1h-1zM550 882h1v1h-1zM550 901h1v1h-1zM568 51h1v1h-1zM568 69h1v1h-1zM568 88h1v1h-1zM568 106h1v1h-1zM568 125h1v1h-1zM568 143h1v1h-1zM568 162h1v1h-1zM568 180h1v1h-1zM568 199h1v1h-1zM568 217h1v1h-1zM568 236h1v1h-1zM568 254h1v1h-1zM568 273h1v1h-1zM568 291h1v1h-1zM568 310h1v1h-1zM568 328h1v1h-1zM568 347h1v1h-1zM568 365h1v1h-1zM568 383h1v1h-1zM568 402h1v1h-1zM568 420h1v1h-1zM568 439h1v1h-1zM568 457h1v1h-1zM568 476h1v1h-1zM568 494h1v1h-1zM568 513h1v1h-1zM568 531h1v1h-1zM568 550h1v1h-1zM568 568h1v1h-1zM568 587h1v1h-1zM568 605h1v1h-1zM568 624h1v1h-1zM568 642h1v1h-1zM568 661h1v1h-1zM568 679h1v1h-1zM568 697h1v1h-1zM568 716h1v1h-1zM568 734h1v1h-1zM568 753h1v1h-1zM568 771h1v1h-1zM568 790h1v1h-1zM568 808h1v1h-1zM568 827h1v1h-1zM568 845h1v1h-1zM568 864h1v1h-1zM568 882h1v1h-1zM568 901h1v1h-1zM587 51h1v1h-1zM587 69h1v1h-1zM587 88h1v1h-1zM587 106h1v1h-1zM587 125h1v1h-1zM587 143h1v1h-1zM587 162h1v1h-1zM587 180h1v1h-1zM587 199h1v1h-1zM587 217h1v1h-1zM587 236h1v1h-1zM587 254h1v1h-1zM587 273h1v1h-1zM587 291h1v1h-1zM587 310h1v1h-1zM587 328h1v1h-1zM587 347h1v1h-1zM587 365h1v1h-1zM587 383h1v1h-1zM587 402h1v1h-1zM587 420h1v1h-1zM587 439h1v1h-1zM587 457h1v1h-1zM587 476h1v1h-1zM587 494h1v1h-1zM587 513h1v1h-1zM587 531h1v1h-1zM587 550h1v1h-1zM587 568h1v1h-1zM587 587h1v1h-1zM587 605h1v1h-1zM587 624h1v1h-1zM587 642h1v1h-1zM587 661h1v1h-1zM587 679h1v1h-1zM587 697h1v1h-1zM587 716h1v1h-1zM587 734h1v1h-1zM587 753h1v1h-1zM587 771h1v1h-1zM587 790h1v1h-1zM587 808h1v1h-1zM587 827h1v1h-1zM587 845h1v1h-1zM587 864h1v1h-1zM587 882h1v1h-1zM587 901h1v1h-1zM605 51h1v1h-1zM605 69h1v1h-1zM605 88h1v1h-1zM605 106h1v1h-1zM605 125h1v1h-1zM605 143h1v1h-1zM605 162h1v1h-1zM605 180h1v1h-1zM605 199h1v1h-1zM605 217h1v1h-1zM605 236h1v1h-1zM605 254h1v1h-1zM605 273h1v1h-1zM605 291h1v1h-1zM605 310h1v1h-1zM605 328h1v1h-1zM605 347h1v1h-1zM605 365h1v1h-1zM605 383h1v1h-1zM605 402h1v1h-1zM605 420h1v1h-1zM605 439h1v1h-1zM605 457h1v1h-1zM605 476h1v1h-1zM605 494h1v1h-1zM605 513h1v1h-1zM605 531h1v1h-1zM605 550h1v1h-1zM605 568h1v1h-1zM605 587h1v1h-1zM605 605h1v1h-1zM605 624h1v1h-1zM605 642h1v1h-1zM605 661h1v1h-1zM605 679h1v1h-1zM605 697h1v1h-1zM605 716h1v1h-1zM605 734h1v1h-1zM605 753h1v1h-1zM605 771h1v1h-1zM605 790h1v1h-1zM605 808h1v1h-1zM605 827h1v1h-1zM605 845h1v1h-1zM605 864h1v1h-1zM605 882h1v1h-1zM605 901h1v1h-1zM624 51h1v1h-1zM624 69h1v1h-1zM624 88h1v1h-1zM624 106h1v1h-1zM624 125h1v1h-1zM624 143h1v1h-1zM624 162h1v1h-1zM624 180h1v1h-1zM624 199h1v1h-1zM624 217h1v1h-1zM624 236h1v1h-1zM624 254h1v1h-1zM624 273h1v1h-1zM624 291h1v1h-1zM624 310h1v1h-1zM624 328h1v1h-1zM624 347h1v1h-1zM624 365h1v1h-1zM624 383h1v1h-1zM624 402h1v1h-1zM624 420h1v1h-1zM624 439h1v1h-1zM624 457h1v1h-1zM624 476h1v1h-1zM624 494h1v1h-1zM624 513h1v1h-1zM624 531h1v1h-1zM624 550h1v1h-1zM624 568h1v1h-1zM624 587h1v1h-1zM624 605h1v1h-1zM624 624h1v1h-1zM624 642h1v1h-1zM624 661h1v1h-1zM624 679h1v1h-1zM624 697h1v1h-1zM624 716h1v1h-1zM624 734h1v1h-1zM624 753h1v1h-1zM624 771h1v1h-1zM624 790h1v1h-1zM624 808h1v1h-1zM624 827h1v1h-1zM624 845h1v1h-1zM624 864h1v1h-1zM624 882h1v1h-1zM624 901h1v1h-1zM642 51h1v1h-1zM642 69h1v1h-1zM642 88h1v1h-1zM642 106h1v1h-1zM642 125h1v1h-1zM642 143h1v1h-1zM642 162h1v1h-1zM642 180h1v1h-1zM642 199h1v1h-1zM642 217h1v1h-1zM642 236h1v1h-1zM642 254h1v1h-1zM642 273h1v1h-1zM642 291h1v1h-1zM642 310h1v1h-1zM642 328h1v1h-1zM642 347h1v1h-1zM642 365h1v1h-1zM642 383h1v1h-1zM642 402h1v1h-1zM642 420h1v1h-1zM642 439h1v1h-1zM642 457h1v1h-1zM642 476h1v1h-1zM642 494h1v1h-1zM642 513h1v1h-1zM642 531h1v1h-1zM642 550h1v1h-1zM642 568h1v1h-1zM642 587h1v1h-1zM642 605h1v1h-1zM642 624h1v1h-1zM642 642h1v1h-1zM642 661h1v1h-1zM642 679h1v1h-1zM642 697h1v1h-1zM642 716h1v1h-1zM642 734h1v1h-1zM642 753h1v1h-1zM642 771h1v1h-1zM642 790h1v1h-1zM642 808h1v1h-1zM642 827h1v1h-1zM642 845h1v1h-1zM642 864h1v1h-1zM642 882h1v1h-1zM642 901h1v1h-1zM661 51h1v1h-1zM661 69h1v1h-1zM661 88h1v1h-1zM661 106h1v1h-1zM661 125h1v1h-1zM661 143h1v1h-1zM661 162h1v1h-1zM661 180h1v1h-1zM661 199h1v1h-1zM661 217h1v1h-1zM661 236h1v1h-1zM661 254h1v1h-1zM661 273h1v1h-1zM661 291h1v1h-1zM661 310h1v1h-1zM661 328h1v1h-1zM661 347h1v1h-1zM661 365h1v1h-1zM661 383h1v1h-1zM661 402h1v1h-1zM661 420h1v1h-1zM661 439h1v1h-1zM661 457h1v1h-1zM661 476h1v1h-1zM661 494h1v1h-1zM661 513h1v1h-1zM661 531h1v1h-1zM661 550h1v1h-1zM661 568h1v1h-1zM661 587h1v1h-1zM661 605h1v1h-1zM661 624h1v1h-1zM661 642h1v1h-1zM661 661h1v1h-1zM661 679h1v1h-1zM661 697h1v1h-1zM661 716h1v1h-1zM661 734h1v1h-1zM661 753h1v1h-1zM661 771h1v1h-1zM661 790h1v1h-1zM661 808h1v1h-1zM661 827h1v1h-1zM661 845h1v1h-1zM661 864h1v1h-1zM661 882h1v1h-1zM661 901h1v1h-1zM679 51h1v1h-1zM679 69h1v1h-1zM679 88h1v1h-1zM679 106h1v1h-1zM679 125h1v1h-1zM679 143h1v1h-1zM679 162h1v1h-1zM679 180h1v1h-1zM679 199h1v1h-1zM679 217h1v1h-1zM679 236h1v1h-1zM679 254h1v1h-1zM679 273h1v1h-1zM679 291h1v1h-1zM679 310h1v1h-1zM679 328h1v1h-1zM679 347h1v1h-1zM679 365h1v1h-1zM679 383h1v1h-1zM679 402h1v1h-1zM679 420h1v1h-1zM679 439h1v1h-1zM679 457h1v1h-1zM679 476h1v1h-1zM679 494h1v1h-1zM679 513h1v1h-1zM679 531h1v1h-1zM679 550h1v1h-1zM679 568h1v1h-1zM679 587h1v1h-1zM679 605h1v1h-1zM679 624h1v1h-1zM679 642h1v1h-1zM679 661h1v1h-1zM679 679h1v1h-1zM679 697h1v1h-1zM679 716h1v1h-1zM679 734h1v1h-1zM679 753h1v1h-1zM679 771h1v1h-1zM679 790h1v1h-1zM679 808h1v1h-1zM679 827h1v1h-1zM679 845h1v1h-1zM679 864h1v1h-1zM679 882h1v1h-1zM679 901h1v1h-1zM698 51h1v1h-1zM698 69h1v1h-1zM698 88h1v1h-1zM698 106h1v1h-1zM698 125h1v1h-1zM698 143h1v1h-1zM698 162h1v1h-1zM698 180h1v1h-1zM698 199h1v1h-1zM698 217h1v1h-1zM698 236h1v1h-1zM698 254h1v1h-1zM698 273h1v1h-1zM698 291h1v1h-1zM698 310h1v1h-1zM698 328h1v1h-1zM698 347h1v1h-1zM698 365h1v1h-1zM698 383h1v1h-1zM698 402h1v1h-1zM698 420h1v1h-1zM698 439h1v1h-1zM698 457h1v1h-1zM698 476h1v1h-1zM698 494h1v1h-1zM698 513h1v1h-1zM698 531h1v1h-1zM698 550h1v1h-1zM698 568h1v1h-1zM698 587h1v1h-1zM698 605h1v1h-1zM698 624h1v1h-1zM698 642h1v1h-1zM698 661h1v1h-1zM698 679h1v1h-1zM698 697h1v1h-1zM698 716h1v1h-1zM698 734h1v1h-1zM698 753h1v1h-1zM698 771h1v1h-1zM698 790h1v1h-1zM698 808h1v1h-1zM698 827h1v1h-1zM698 845h1v1h-1zM698 864h1v1h-1zM698 882h1v1h-1zM698 901h1v1h-1zM716 51h1v1h-1zM716 69h1v1h-1zM716 88h1v1h-1zM716 106h1v1h-1zM716 125h1v1h-1zM716 143h1v1h-1zM716 162h1v1h-1zM716 180h1v1h-1zM716 199h1v1h-1zM716 217h1v1h-1zM716 236h1v1h-1zM716 254h1v1h-1zM716 273h1v1h-1zM716 291h1v1h-1zM716 310h1v1h-1zM716 328h1v1h-1zM716 347h1v1h-1zM716 365h1v1h-1zM716 383h1v1h-1zM716 402h1v1h-1zM716 420h1v1h-1zM716 439h1v1h-1zM716 457h1v1h-1zM716 476h1v1h-1zM716 494h1v1h-1zM716 513h1v1h-1zM716 531h1v1h-1zM716 550h1v1h-1zM716 568h1v1h-1zM716 587h1v1h-1zM716 605h1v1h-1zM716 624h1v1h-1zM716 642h1v1h-1zM716 661h1v1h-1zM716 679h1v1h-1zM716 697h1v1h-1zM716 716h1v1h-1zM716 734h1v1h-1zM716 753h1v1h-1zM716 771h1v1h-1zM716 790h1v1h-1zM716 808h1v1h-1zM716 827h1v1h-1zM716 845h1v1h-1zM716 864h1v1h-1zM716 882h1v1h-1zM716 901h1v1h-1zM734 51h1v1h-1zM734 69h1v1h-1zM734 88h1v1h-1zM734 106h1v1h-1zM734 125h1v1h-1zM734 143h1v1h-1zM734 162h1v1h-1zM734 180h1v1h-1zM734 199h1v1h-1zM734 217h1v1h-1zM734 236h1v1h-1zM734 254h1v1h-1zM734 273h1v1h-1zM734 291h1v1h-1zM734 310h1v1h-1zM734 328h1v1h-1zM734 347h1v1h-1zM734 365h1v1h-1zM734 383h1v1h-1zM734 402h1v1h-1zM734 420h1v1h-1zM734 439h1v1h-1zM734 457h1v1h-1zM734 476h1v1h-1zM734 494h1v1h-1zM734 513h1v1h-1zM734 531h1v1h-1zM734 550h1v1h-1zM734 568h1v1h-1zM734 587h1v1h-1zM734 605h1v1h-1zM734 624h1v1h-1zM734 642h1v1h-1zM734 661h1v1h-1zM734 679h1v1h-1zM734 697h1v1h-1zM734 716h1v1h-1zM734 734h1v1h-1zM734 753h1v1h-1zM734 771h1v1h-1zM734 790h1v1h-1zM734 808h1v1h-1zM734 827h1v1h-1zM734 845h1v1h-1zM734 864h1v1h-1zM734 882h1v1h-1zM734 901h1v1h-1zM753 51h1v1h-1zM753 69h1v1h-1zM753 88h1v1h-1zM753 106h1v1h-1zM753 125h1v1h-1zM753 143h1v1h-1zM753 162h1v1h-1zM753 180h1v1h-1zM753 199h1v1h-1zM753 217h1v1h-1zM753 236h1v1h-1zM753 254h1v1h-1zM753 273h1v1h-1zM753 291h1v1h-1zM753 310h1v1h-1zM753 328h1v1h-1zM753 347h1v1h-1zM753 365h1v1h-1zM753 383h1v1h-1zM753 402h1v1h-1zM753 420h1v1h-1zM753 439h1v1h-1zM753 457h1v1h-1zM753 476h1v1h-1zM753 494h1v1h-1zM753 513h1v1h-1zM753 531h1v1h-1zM753 550h1v1h-1zM753 568h1v1h-1zM753 587h1v1h-1zM753 605h1v1h-1zM753 624h1v1h-1zM753 642h1v1h-1zM753 661h1v1h-1zM753 679h1v1h-1zM753 697h1v1h-1zM753 716h1v1h-1zM753 734h1v1h-1zM753 753h1v1h-1zM753 771h1v1h-1zM753 790h1v1h-1zM753 808h1v1h-1zM753 827h1v1h-1zM753 845h1v1h-1zM753 864h1v1h-1zM753 882h1v1h-1zM753 901h1v1h-1zM771 51h1v1h-1zM771 69h1v1h-1zM771 88h1v1h-1zM771 106h1v1h-1zM771 125h1v1h-1zM771 143h1v1h-1zM771 162h1v1h-1zM771 180h1v1h-1zM771 199h1v1h-1zM771 217h1v1h-1zM771 236h1v1h-1zM771 254h1v1h-1zM771 273h1v1h-1zM771 291h1v1h-1zM771 310h1v1h-1zM771 328h1v1h-1zM771 347h1v1h-1zM771 365h1v1h-1zM771 383h1v1h-1zM771 402h1v1h-1zM771 420h1v1h-1zM771 439h1v1h-1zM771 457h1v1h-1zM771 476h1v1h-1zM771 494h1v1h-1zM771 513h1v1h-1zM771 531h1v1h-1zM771 550h1v1h-1zM771 568h1v1h-1zM771 587h1v1h-1zM771 605h1v1h-1zM771 624h1v1h-1zM771 642h1v1h-1zM771 661h1v1h-1zM771 679h1v1h-1zM771 697h1v1h-1zM771 716h1v1h-1zM771 734h1v1h-1zM771 753h1v1h-1zM771 771h1v1h-1zM771 790h1v1h-1zM771 808h1v1h-1zM771 827h1v1h-1zM771 845h1v1h-1zM771 864h1v1h-1zM771 882h1v1h-1zM771 901h1v1h-1zM790 51h1v1h-1zM790 69h1v1h-1zM790 88h1v1h-1zM790 106h1v1h-1zM790 125h1v1h-1zM790 143h1v1h-1zM790 162h1v1h-1zM790 180h1v1h-1zM790 199h1v1h-1zM790 217h1v1h-1zM790 236h1v1h-1zM790 254h1v1h-1zM790 273h1v1h-1zM790 291h1v1h-1zM790 310h1v1h-1zM790 328h1v1h-1zM790 347h1v1h-1zM790 365h1v1h-1zM790 383h1v1h-1zM790 402h1v1h-1zM790 420h1v1h-1zM790 439h1v1h-1zM790 457h1v1h-1zM790 476h1v1h-1zM790 494h1v1h-1zM790 513h1v1h-1zM790 531h1v1h-1zM790 550h1v1h-1zM790 568h1v1h-1zM790 587h1v1h-1zM790 605h1v1h-1zM790 624h1v1h-1zM790 642h1v1h-1zM790 661h1v1h-1zM790 679h1v1h-1zM790 697h1v1h-1zM790 716h1v1h-1zM790 734h1v1h-1zM790 753h1v1h-1zM790 771h1v1h-1zM790 790h1v1h-1zM790 808h1v1h-1zM790 827h1v1h-1zM790 845h1v1h-1zM790 864h1v1h-1zM790 882h1v1h-1zM790 901h1v1h-1zM808 51h1v1h-1zM808 69h1v1h-1zM808 88h1v1h-1zM808 106h1v1h-1zM808 125h1v1h-1zM808 143h1v1h-1zM808 162h1v1h-1zM808 180h1v1h-1zM808 199h1v1h-1zM808 217h1v1h-1zM808 236h1v1h-1zM808 254h1v1h-1zM808 273h1v1h-1zM808 291h1v1h-1zM808 310h1v1h-1zM808 328h1v1h-1zM808 347h1v1h-1zM808 365h1v1h-1zM808 383h1v1h-1zM808 402h1v1h-1zM808 420h1v1h-1zM808 439h1v1h-1zM808 457h1v1h-1zM808 476h1v1h-1zM808 494h1v1h-1zM808 513h1v1h-1zM808 531h1v1h-1zM808 550h1v1h-1zM808 568h1v1h-1zM808 587h1v1h-1zM808 605h1v1h-1zM808 624h1v1h-1zM808 642h1v1h-1zM808 661h1v1h-1zM808 679h1v1h-1zM808 697h1v1h-1zM808 716h1v1h-1zM808 734h1v1h-1zM808 753h1v1h-1zM808 771h1v1h-1zM808 790h1v1h-1zM808 808h1v1h-1zM808 827h1v1h-1zM808 845h1v1h-1zM808 864h1v1h-1zM808 882h1v1h-1zM808 901h1v1h-1zM827 51h1v1h-1zM827 69h1v1h-1zM827 88h1v1h-1zM827 106h1v1h-1zM827 125h1v1h-1zM827 143h1v1h-1zM827 162h1v1h-1zM827 180h1v1h-1zM827 199h1v1h-1zM827 217h1v1h-1zM827 236h1v1h-1zM827 254h1v1h-1zM827 273h1v1h-1zM827 291h1v1h-1zM827 310h1v1h-1zM827 328h1v1h-1zM827 347h1v1h-1zM827 365h1v1h-1zM827 383h1v1h-1zM827 402h1v1h-1zM827 420h1v1h-1zM827 439h1v1h-1zM827 457h1v1h-1zM827 476h1v1h-1zM827 494h1v1h-1zM827 513h1v1h-1zM827 531h1v1h-1zM827 550h1v1h-1zM827 568h1v1h-1zM827 587h1v1h-1zM827 605h1v1h-1zM827 624h1v1h-1zM827 642h1v1h-1zM827 661h1v1h-1zM827 679h1v1h-1zM827 697h1v1h-1zM827 716h1v1h-1zM827 734h1v1h-1zM827 753h1v1h-1zM827 771h1v1h-1zM827 790h1v1h-1zM827 808h1v1h-1zM827 827h1v1h-1zM827 845h1v1h-1zM827 864h1v1h-1zM827 882h1v1h-1zM827 901h1v1h-1zM845 51h1v1h-1zM845 69h1v1h-1zM845 88h1v1h-1zM845 106h1v1h-1zM845 125h1v1h-1zM845 143h1v1h-1zM845 162h1v1h-1zM845 180h1v1h-1zM845 199h1v1h-1zM845 217h1v1h-1zM845 236h1v1h-1zM845 254h1v1h-1zM845 273h1v1h-1zM845 291h1v1h-1zM845 310h1v1h-1zM845 328h1v1h-1zM845 347h1v1h-1zM845 365h1v1h-1zM845 383h1v1h-1zM845 402h1v1h-1zM845 420h1v1h-1zM845 439h1v1h-1zM845 457h1v1h-1zM845 476h1v1h-1zM845 494h1v1h-1zM845 513h1v1h-1zM845 531h1v1h-1zM845 550h1v1h-1zM845 568h1v1h-1zM845 587h1v1h-1zM845 605h1v1h-1zM845 624h1v1h-1zM845 642h1v1h-1zM845 661h1v1h-1zM845 679h1v1h-1zM845 697h1v1h-1zM845 716h1v1h-1zM845 734h1v1h-1zM845 753h1v1h-1zM845 771h1v1h-1zM845 790h1v1h-1zM845 808h1v1h-1zM845 827h1v1h-1zM845 845h1v1h-1zM845 864h1v1h-1zM845 882h1v1h-1zM845 901h1v1h-1zM864 51h1v1h-1zM864 69h1v1h-1zM864 88h1v1h-1zM864 106h1v1h-1zM864 125h1v1h-1zM864 143h1v1h-1zM864 162h1v1h-1zM864 180h1v1h-1zM864 199h1v1h-1zM864 217h1v1h-1zM864 236h1v1h-1zM864 254h1v1h-1zM864 273h1v1h-1zM864 291h1v1h-1zM864 310h1v1h-1zM864 328h1v1h-1zM864 347h1v1h-1zM864 365h1v1h-1zM864 383h1v1h-1zM864 402h1v1h-1zM864 420h1v1h-1zM864 439h1v1h-1zM864 457h1v1h-1zM864 476h1v1h-1zM864 494h1v1h-1zM864 513h1v1h-1zM864 531h1v1h-1zM864 550h1v1h-1zM864 568h1v1h-1zM864 587h1v1h-1zM864 605h1v1h-1zM864 624h1v1h-1zM864 642h1v1h-1zM864 661h1v1h-1zM864 679h1v1h-1zM864 697h1v1h-1zM864 716h1v1h-1zM864 734h1v1h-1zM864 753h1v1h-1zM864 771h1v1h-1zM864 790h1v1h-1zM864 808h1v1h-1zM864 827h1v1h-1zM864 845h1v1h-1zM864 864h1v1h-1zM864 882h1v1h-1zM864 901h1v1h-1zM882 51h1v1h-1zM882 69h1v1h-1zM882 88h1v1h-1zM882 106h1v1h-1zM882 125h1v1h-1zM882 143h1v1h-1zM882 162h1v1h-1zM882 180h1v1h-1zM882 199h1v1h-1zM882 217h1v1h-1zM882 236h1v1h-1zM882 254h1v1h-1zM882 273h1v1h-1zM882 291h1v1h-1zM882 310h1v1h-1zM882 328h1v1h-1zM882 347h1v1h-1zM882 365h1v1h-1zM882 383h1v1h-1zM882 402h1v1h-1zM882 420h1v1h-1zM882 439h1v1h-1zM882 457h1v1h-1zM882 476h1v1h-1zM882 494h1v1h-1zM882 513h1v1h-1zM882 531h1v1h-1zM882 550h1v1h-1zM882 568h1v1h-1zM882 587h1v1h-1zM882 605h1v1h-1zM882 624h1v1h-1zM882 642h1v1h-1zM882 661h1v1h-1zM882 679h1v1h-1zM882 697h1v1h-1zM882 716h1v1h-1zM882 734h1v1h-1zM882 753h1v1h-1zM882 771h1v1h-1zM882 790h1v1h-1zM882 808h1v1h-1zM882 827h1v1h-1zM882 845h1v1h-1zM882 864h1v1h-1zM882 882h1v1h-1zM882 901h1v1h-1zM901 51h1v1h-1zM901 69h1v1h-1zM901 88h1v1h-1zM901 106h1v1h-1zM901 125h1v1h-1zM901 143h1v1h-1zM901 162h1v1h-1zM901 180h1v1h-1zM901 199h1v1h-1zM901 217h1v1h-1zM901 236h1v1h-1zM901 254h1v1h-1zM901 273h1v1h-1zM901 291h1v1h-1zM901 310h1v1h-1zM901 328h1v1h-1zM901 347h1v1h-1zM901 365h1v1h-1zM901 383h1v1h-1zM901 402h1v1h-1zM901 420h1v1h-1zM901 439h1v1h-1zM901 457h1v1h-1zM901 476h1v1h-1zM901 494h1v1h-1zM901 513h1v1h-1zM901 531h1v1h-1zM901 550h1v1h-1zM901 568h1v1h-1zM901 587h1v1h-1zM901 605h1v1h-1zM901 624h1v1h-1zM901 642h1v1h-1zM901 661h1v1h-1zM901 679h1v1h-1zM901 697h1v1h-1zM901 716h1v1h-1zM901 734h1v1h-1zM901 753h1v1h-1zM901 771h1v1h-1zM901 790h1v1h-1zM901 808h1v1h-1zM901 827h1v1h-1zM901 845h1v1h-1zM901 864h1v1h-1zM901 882h1v1h-1zM901 901h1v1h-1zM919 51h1v1h-1zM919 69h1v1h-1zM919 88h1v1h-1zM919 106h1v1h-1zM919 125h1v1h-1zM919 143h1v1h-1zM919 162h1v1h-1zM919 180h1v1h-1zM919 199h1v1h-1zM919 217h1v1h-1zM919 236h1v1h-1zM919 254h1v1h-1zM919 273h1v1h-1zM919 291h1v1h-1zM919 310h1v1h-1zM919 328h1v1h-1zM919 347h1v1h-1zM919 365h1v1h-1zM919 383h1v1h-1zM919 402h1v1h-1zM919 420h1v1h-1zM919 439h1v1h-1zM919 457h1v1h-1zM919 476h1v1h-1zM919 494h1v1h-1zM919 513h1v1h-1zM919 531h1v1h-1zM919 550h1v1h-1zM919 568h1v1h-1zM919 587h1v1h-1zM919 605h1v1h-1zM919 624h1v1h-1zM919 642h1v1h-1zM919 661h1v1h-1zM919 679h1v1h-1zM919 697h1v1h-1zM919 716h1v1h-1zM919 734h1v1h-1zM919 753h1v1h-1zM919 771h1v1h-1zM919 790h1v1h-1zM919 808h1v1h-1zM919 827h1v1h-1zM919 845h1v1h-1zM919 864h1v1h-1zM919 882h1v1h-1zM919 901h1v1h-1zM938 51h1v1h-1zM938 69h1v1h-1zM938 88h1v1h-1zM938 106h1v1h-1zM938 125h1v1h-1zM938 143h1v1h-1zM938 162h1v1h-1zM938 180h1v1h-1zM938 199h1v1h-1zM938 217h1v1h-1zM938 236h1v1h-1zM938 254h1v1h-1zM938 273h1v1h-1zM938 291h1v1h-1zM938 310h1v1h-1zM938 328h1v1h-1zM938 347h1v1h-1zM938 365h1v1h-1zM938 383h1v1h-1zM938 402h1v1h-1zM938 420h1v1h-1zM938 439h1v1h-1zM938 457h1v1h-1zM938 476h1v1h-1zM938 494h1v1h-1zM938 513h1v1h-1zM938 531h1v1h-1zM938 550h1v1h-1zM938 568h1v1h-1zM938 587h1v1h-1zM938 605h1v1h-1zM938 624h1v1h-1zM938 642h1v1h-1zM938 661h1v1h-1zM938 679h1v1h-1zM938 697h1v1h-1zM938 716h1v1h-1zM938 734h1v1h-1zM938 753h1v1h-1zM938 771h1v1h-1zM938 790h1v1h-1zM938 808h1v1h-1zM938 827h1v1h-1zM938 845h1v1h-1zM938 864h1v1h-1zM938 882h1v1h-1zM938 901h1v1h-1zM956 51h1v1h-1zM956 69h1v1h-1zM956 88h1v1h-1zM956 106h1v1h-1zM956 125h1v1h-1zM956 143h1v1h-1zM956 162h1v1h-1zM956 180h1v1h-1zM956 199h1v1h-1zM956 217h1v1h-1zM956 236h1v1h-1zM956 254h1v1h-1zM956 273h1v1h-1zM956 291h1v1h-1zM956 310h1v1h-1zM956 328h1v1h-1zM956 347h1v1h-1zM956 365h1v1h-1zM956 383h1v1h-1zM956 402h1v1h-1zM956 420h1v1h-1zM956 439h1v1h-1zM956 457h1v1h-1zM956 476h1v1h-1zM956 494h1v1h-1zM956 513h1v1h-1zM956 531h1v1h-1zM956 550h1v1h-1zM956 568h1v1h-1zM956 587h1v1h-1zM956 605h1v1h-1zM956 624h1v1h-1zM956 642h1v1h-1zM956 661h1v1h-1zM956 679h1v1h-1zM956 697h1v1h-1zM956 716h1v1h-1zM956 734h1v1h-1zM956 753h1v1h-1zM956 771h1v1h-1zM956 790h1v1h-1zM956 808h1v1h-1zM956 827h1v1h-1zM956 845h1v1h-1zM956 864h1v1h-1zM956 882h1v1h-1zM956 901h1v1h-1zM975 51h1v1h-1zM975 69h1v1h-1zM975 88h1v1h-1zM975 106h1v1h-1zM975 125h1v1h-1zM975 143h1v1h-1zM975 162h1v1h-1zM975 180h1v1h-1zM975 199h1v1h-1zM975 217h1v1h-1zM975 236h1v1h-1zM975 254h1v1h-1zM975 273h1v1h-1zM975 291h1v1h-1zM975 310h1v1h-1zM975 328h1v1h-1zM975 347h1v1h-1zM975 365h1v1h-1zM975 383h1v1h-1zM975 402h1v1h-1zM975 420h1v1h-1zM975 439h1v1h-1zM975 457h1v1h-1zM975 476h1v1h-1zM975 494h1v1h-1zM975 513h1v1h-1zM975 531h1v1h-1zM975 550h1v1h-1zM975 568h1v1h-1zM975 587h1v1h-1zM975 605h1v1h-1zM975 624h1v1h-1zM975 642h1v1h-1zM975 661h1v1h-1zM975 679h1v1h-1zM975 697h1v1h-1zM975 716h1v1h-1zM975 734h1v1h-1zM975 753h1v1h-1zM975 771h1v1h-1zM975 790h1v1h-1zM975 808h1v1h-1zM975 827h1v1h-1zM975 845h1v1h-1zM975 864h1v1h-1zM975 882h1v1h-1zM975 901h1v1h-1zM993 51h1v1h-1zM993 69h1v1h-1zM993 88h1v1h-1zM993 106h1v1h-1zM993 125h1v1h-1zM993 143h1v1h-1zM993 162h1v1h-1zM993 180h1v1h-1zM993 199h1v1h-1zM993 217h1v1h-1zM993 236h1v1h-1zM993 254h1v1h-1zM993 273h1v1h-1zM993 291h1v1h-1zM993 310h1v1h-1zM993 328h1v1h-1zM993 347h1v1h-1zM993 365h1v1h-1zM993 383h1v1h-1zM993 402h1v1h-1zM993 420h1v1h-1zM993 439h1v1h-1zM993 457h1v1h-1zM993 476h1v1h-1zM993 494h1v1h-1zM993 513h1v1h-1zM993 531h1v1h-1zM993 550h1v1h-1zM993 568h1v1h-1zM993 587h1v1h-1zM993 605h1v1h-1zM993 624h1v1h-1zM993 642h1v1h-1zM993 661h1v1h-1zM993 679h1v1h-1zM993 697h1v1h-1zM993 716h1v1h-1zM993 734h1v1h-1zM993 753h1v1h-1zM993 771h1v1h-1zM993 790h1v1h-1zM993 808h1v1h-1zM993 827h1v1h-1zM993 845h1v1h-1zM993 864h1v1h-1zM993 882h1v1h-1zM993 901h1v1h-1zM1012 51h1v1h-1zM1012 69h1v1h-1zM1012 88h1v1h-1zM1012 106h1v1h-1zM1012 125h1v1h-1zM1012 143h1v1h-1zM1012 162h1v1h-1zM1012 180h1v1h-1zM1012 199h1v1h-1zM1012 217h1v1h-1zM1012 236h1v1h-1zM1012 254h1v1h-1zM1012 273h1v1h-1zM1012 291h1v1h-1zM1012 310h1v1h-1zM1012 328h1v1h-1zM1012 347h1v1h-1zM1012 365h1v1h-1zM1012 383h1v1h-1zM1012 402h1v1h-1zM1012 420h1v1h-1zM1012 439h1v1h-1zM1012 457h1v1h-1zM1012 476h1v1h-1zM1012 494h1v1h-1zM1012 513h1v1h-1zM1012 531h1v1h-1zM1012 550h1v1h-1zM1012 568h1v1h-1zM1012 587h1v1h-1zM1012 605h1v1h-1zM1012 624h1v1h-1zM1012 642h1v1h-1zM1012 661h1v1h-1zM1012 679h1v1h-1zM1012 697h1v1h-1zM1012 716h1v1h-1zM1012 734h1v1h-1zM1012 753h1v1h-1zM1012 771h1v1h-1zM1012 790h1v1h-1zM1012 808h1v1h-1zM1012 827h1v1h-1zM1012 845h1v1h-1zM1012 864h1v1h-1zM1012 882h1v1h-1zM1012 901h1v1h-1zM1030 51h1v1h-1zM1030 69h1v1h-1zM1030 88h1v1h-1zM1030 106h1v1h-1zM1030 125h1v1h-1zM1030 143h1v1h-1zM1030 162h1v1h-1zM1030 180h1v1h-1zM1030 199h1v1h-1zM1030 217h1v1h-1zM1030 236h1v1h-1zM1030 254h1v1h-1zM1030 273h1v1h-1zM1030 291h1v1h-1zM1030 310h1v1h-1zM1030 328h1v1h-1zM1030 347h1v1h-1zM1030 365h1v1h-1zM1030 383h1v1h-1zM1030 402h1v1h-1zM1030 420h1v1h-1zM1030 439h1v1h-1zM1030 457h1v1h-1zM1030 476h1v1h-1zM1030 494h1v1h-1zM1030 513h1v1h-1zM1030 531h1v1h-1zM1030 550h1v1h-1zM1030 568h1v1h-1zM1030 587h1v1h-1zM1030 605h1v1h-1zM1030 624h1v1h-1zM1030 642h1v1h-1zM1030 661h1v1h-1zM1030 679h1v1h-1zM1030 697h1v1h-1zM1030 716h1v1h-1zM1030 734h1v1h-1zM1030 753h1v1h-1zM1030 771h1v1h-1zM1030 790h1v1h-1zM1030 808h1v1h-1zM1030 827h1v1h-1zM1030 845h1v1h-1zM1030 864h1v1h-1zM1030 882h1v1h-1zM1030 901h1v1h-1zM1048 51h1v1h-1zM1048 69h1v1h-1zM1048 88h1v1h-1zM1048 106h1v1h-1zM1048 125h1v1h-1zM1048 143h1v1h-1zM1048 162h1v1h-1zM1048 180h1v1h-1zM1048 199h1v1h-1zM1048 217h1v1h-1zM1048 236h1v1h-1zM1048 254h1v1h-1zM1048 273h1v1h-1zM1048 291h1v1h-1zM1048 310h1v1h-1zM1048 328h1v1h-1zM1048 347h1v1h-1zM1048 365h1v1h-1zM1048 383h1v1h-1zM1048 402h1v1h-1zM1048 420h1v1h-1zM1048 439h1v1h-1zM1048 457h1v1h-1zM1048 476h1v1h-1zM1048 494h1v1h-1zM1048 513h1v1h-1zM1048 531h1v1h-1zM1048 550h1v1h-1zM1048 568h1v1h-1zM1048 587h1v1h-1zM1048 605h1v1h-1zM1048 624h1v1h-1zM1048 642h1v1h-1zM1048 661h1v1h-1zM1048 679h1v1h-1zM1048 697h1v1h-1zM1048 716h1v1h-1zM1048 734h1v1h-1zM1048 753h1v1h-1zM1048 771h1v1h-1zM1048 790h1v1h-1zM1048 808h1v1h-1zM1048 827h1v1h-1zM1048 845h1v1h-1zM1048 864h1v1h-1zM1048 882h1v1h-1zM1048 901h1v1h-1zM1067 51h1v1h-1zM1067 69h1v1h-1zM1067 88h1v1h-1zM1067 106h1v1h-1zM1067 125h1v1h-1zM1067 143h1v1h-1zM1067 162h1v1h-1zM1067 180h1v1h-1zM1067 199h1v1h-1zM1067 217h1v1h-1zM1067 236h1v1h-1zM1067 254h1v1h-1zM1067 273h1v1h-1zM1067 291h1v1h-1zM1067 310h1v1h-1zM1067 328h1v1h-1zM1067 347h1v1h-1zM1067 365h1v1h-1zM1067 383h1v1h-1zM1067 402h1v1h-1zM1067 420h1v1h-1zM1067 439h1v1h-1zM1067 457h1v1h-1zM1067 476h1v1h-1zM1067 494h1v1h-1zM1067 513h1v1h-1zM1067 531h1v1h-1zM1067 550h1v1h-1zM1067 568h1v1h-1zM1067 587h1v1h-1zM1067 605h1v1h-1zM1067 624h1v1h-1zM1067 642h1v1h-1zM1067 661h1v1h-1zM1067 679h1v1h-1zM1067 697h1v1h-1zM1067 716h1v1h-1zM1067 734h1v1h-1zM1067 753h1v1h-1zM1067 771h1v1h-1zM1067 790h1v1h-1zM1067 808h1v1h-1zM1067 827h1v1h-1zM1067 845h1v1h-1zM1067 864h1v1h-1zM1067 882h1v1h-1zM1067 901h1v1h-1zM1085 51h1v1h-1zM1085 69h1v1h-1zM1085 88h1v1h-1zM1085 106h1v1h-1zM1085 125h1v1h-1zM1085 143h1v1h-1zM1085 162h1v1h-1zM1085 180h1v1h-1zM1085 199h1v1h-1zM1085 217h1v1h-1zM1085 236h1v1h-1zM1085 254h1v1h-1zM1085 273h1v1h-1zM1085 291h1v1h-1zM1085 310h1v1h-1zM1085 328h1v1h-1zM1085 347h1v1h-1zM1085 365h1v1h-1zM1085 383h1v1h-1zM1085 402h1v1h-1zM1085 420h1v1h-1zM1085 439h1v1h-1zM1085 457h1v1h-1zM1085 476h1v1h-1zM1085 494h1v1h-1zM1085 513h1v1h-1zM1085 531h1v1h-1zM1085 550h1v1h-1zM1085 568h1v1h-1zM1085 587h1v1h-1zM1085 605h1v1h-1zM1085 624h1v1h-1zM1085 642h1v1h-1zM1085 661h1v1h-1zM1085 679h1v1h-1zM1085 697h1v1h-1zM1085 716h1v1h-1zM1085 734h1v1h-1zM1085 753h1v1h-1zM1085 771h1v1h-1zM1085 790h1v1h-1zM1085 808h1v1h-1zM1085 827h1v1h-1zM1085 845h1v1h-1zM1085 864h1v1h-1zM1085 882h1v1h-1zM1085 901h1v1h-1zM1104 51h1v1h-1zM1104 69h1v1h-1zM1104 88h1v1h-1zM1104 106h1v1h-1zM1104 125h1v1h-1zM1104 143h1v1h-1zM1104 162h1v1h-1zM1104 180h1v1h-1zM1104 199h1v1h-1zM1104 217h1v1h-1zM1104 236h1v1h-1zM1104 254h1v1h-1zM1104 273h1v1h-1zM1104 291h1v1h-1zM1104 310h1v1h-1zM1104 328h1v1h-1zM1104 347h1v1h-1zM1104 365h1v1h-1zM1104 383h1v1h-1zM1104 402h1v1h-1zM1104 420h1v1h-1zM1104 439h1v1h-1zM1104 457h1v1h-1zM1104 476h1v1h-1zM1104 494h1v1h-1zM1104 513h1v1h-1zM1104 531h1v1h-1zM1104 550h1v1h-1zM1104 568h1v1h-1zM1104 587h1v1h-1zM1104 605h1v1h-1zM1104 624h1v1h-1zM1104 642h1v1h-1zM1104 661h1v1h-1zM1104 679h1v1h-1zM1104 697h1v1h-1zM1104 716h1v1h-1zM1104 734h1v1h-1zM1104 753h1v1h-1zM1104 771h1v1h-1zM1104 790h1v1h-1zM1104 808h1v1h-1zM1104 827h1v1h-1zM1104 845h1v1h-1zM1104 864h1v1h-1zM1104 882h1v1h-1zM1104 901h1v1h-1zM1122 51h1v1h-1zM1122 69h1v1h-1zM1122 88h1v1h-1zM1122 106h1v1h-1zM1122 125h1v1h-1zM1122 143h1v1h-1zM1122 162h1v1h-1zM1122 180h1v1h-1zM1122 199h1v1h-1zM1122 217h1v1h-1zM1122 236h1v1h-1zM1122 254h1v1h-1zM1122 273h1v1h-1zM1122 291h1v1h-1zM1122 310h1v1h-1zM1122 328h1v1h-1zM1122 347h1v1h-1zM1122 365h1v1h-1zM1122 383h1v1h-1zM1122 402h1v1h-1zM1122 420h1v1h-1zM1122 439h1v1h-1zM1122 457h1v1h-1zM1122 476h1v1h-1zM1122 494h1v1h-1zM1122 513h1v1h-1zM1122 531h1v1h-1zM1122 550h1v1h-1zM1122 568h1v1h-1zM1122 587h1v1h-1zM1122 605h1v1h-1zM1122 624h1v1h-1zM1122 642h1v1h-1zM1122 661h1v1h-1zM1122 679h1v1h-1zM1122 697h1v1h-1zM1122 716h1v1h-1zM1122 734h1v1h-1zM1122 753h1v1h-1zM1122 771h1v1h-1zM1122 790h1v1h-1zM1122 808h1v1h-1zM1122 827h1v1h-1zM1122 845h1v1h-1zM1122 864h1v1h-1zM1122 882h1v1h-1zM1122 901h1v1h-1zM1141 51h1v1h-1zM1141 69h1v1h-1zM1141 88h1v1h-1zM1141 106h1v1h-1zM1141 125h1v1h-1zM1141 143h1v1h-1zM1141 162h1v1h-1zM1141 180h1v1h-1zM1141 199h1v1h-1zM1141 217h1v1h-1zM1141 236h1v1h-1zM1141 254h1v1h-1zM1141 273h1v1h-1zM1141 291h1v1h-1zM1141 310h1v1h-1zM1141 328h1v1h-1zM1141 347h1v1h-1zM1141 365h1v1h-1zM1141 383h1v1h-1zM1141 402h1v1h-1zM1141 420h1v1h-1zM1141 439h1v1h-1zM1141 457h1v1h-1zM1141 476h1v1h-1zM1141 494h1v1h-1zM1141 513h1v1h-1zM1141 531h1v1h-1zM1141 550h1v1h-1zM1141 568h1v1h-1zM1141 587h1v1h-1zM1141 605h1v1h-1zM1141 624h1v1h-1zM1141 642h1v1h-1zM1141 661h1v1h-1zM1141 679h1v1h-1zM1141 697h1v1h-1zM1141 716h1v1h-1zM1141 734h1v1h-1zM1141 753h1v1h-1zM1141 771h1v1h-1zM1141 790h1v1h-1zM1141 808h1v1h-1zM1141 827h1v1h-1zM1141 845h1v1h-1zM1141 864h1v1h-1zM1141 882h1v1h-1zM1141 901h1v1h-1zM1159 51h1v1h-1zM1159 69h1v1h-1zM1159 88h1v1h-1zM1159 106h1v1h-1zM1159 125h1v1h-1zM1159 143h1v1h-1zM1159 162h1v1h-1zM1159 180h1v1h-1zM1159 199h1v1h-1zM1159 217h1v1h-1zM1159 236h1v1h-1zM1159 254h1v1h-1zM1159 273h1v1h-1zM1159 291h1v1h-1zM1159 310h1v1h-1zM1159 328h1v1h-1zM1159 347h1v1h-1zM1159 365h1v1h-1zM1159 383h1v1h-1zM1159 402h1v1h-1zM1159 420h1v1h-1zM1159 439h1v1h-1zM1159 457h1v1h-1zM1159 476h1v1h-1zM1159 494h1v1h-1zM1159 513h1v1h-1zM1159 531h1v1h-1zM1159 550h1v1h-1zM1159 568h1v1h-1zM1159 587h1v1h-1zM1159 605h1v1h-1zM1159 624h1v1h-1zM1159 642h1v1h-1zM1159 661h1v1h-1zM1159 679h1v1h-1zM1159 697h1v1h-1zM1159 716h1v1h-1zM1159 734h1v1h-1zM1159 753h1v1h-1zM1159 771h1v1h-1zM1159 790h1v1h-1zM1159 808h1v1h-1zM1159 827h1v1h-1zM1159 845h1v1h-1zM1159 864h1v1h-1zM1159 882h1v1h-1zM1159 901h1v1h-1zM1178 51h1v1h-1zM1178 69h1v1h-1zM1178 88h1v1h-1zM1178 106h1v1h-1zM1178 125h1v1h-1zM1178 143h1v1h-1zM1178 162h1v1h-1zM1178 180h1v1h-1zM1178 199h1v1h-1zM1178 217h1v1h-1zM1178 236h1v1h-1zM1178 254h1v1h-1zM1178 273h1v1h-1zM1178 291h1v1h-1zM1178 310h1v1h-1zM1178 328h1v1h-1zM1178 347h1v1h-1zM1178 365h1v1h-1zM1178 383h1v1h-1zM1178 402h1v1h-1zM1178 420h1v1h-1zM1178 439h1v1h-1zM1178 457h1v1h-1zM1178 476h1v1h-1zM1178 494h1v1h-1zM1178 513h1v1h-1zM1178 531h1v1h-1zM1178 550h1v1h-1zM1178 568h1v1h-1zM1178 587h1v1h-1zM1178 605h1v1h-1zM1178 624h1v1h-1zM1178 642h1v1h-1zM1178 661h1v1h-1zM1178 679h1v1h-1zM1178 697h1v1h-1zM1178 716h1v1h-1zM1178 734h1v1h-1zM1178 753h1v1h-1zM1178 771h1v1h-1zM1178 790h1v1h-1zM1178 808h1v1h-1zM1178 827h1v1h-1zM1178 845h1v1h-1zM1178 864h1v1h-1zM1178 882h1v1h-1zM1178 901h1v1h-1zM1196 51h1v1h-1zM1196 69h1v1h-1zM1196 88h1v1h-1zM1196 106h1v1h-1zM1196 125h1v1h-1zM1196 143h1v1h-1zM1196 162h1v1h-1zM1196 180h1v1h-1zM1196 199h1v1h-1zM1196 217h1v1h-1zM1196 236h1v1h-1zM1196 254h1v1h-1zM1196 273h1v1h-1zM1196 291h1v1h-1zM1196 310h1v1h-1zM1196 328h1v1h-1zM1196 347h1v1h-1zM1196 365h1v1h-1zM1196 383h1v1h-1zM1196 402h1v1h-1zM1196 420h1v1h-1zM1196 439h1v1h-1zM1196 457h1v1h-1zM1196 476h1v1h-1zM1196 494h1v1h-1zM1196 513h1v1h-1zM1196 531h1v1h-1zM1196 550h1v1h-1zM1196 568h1v1h-1zM1196 587h1v1h-1zM1196 605h1v1h-1zM1196 624h1v1h-1zM1196 642h1v1h-1zM1196 661h1v1h-1zM1196 679h1v1h-1zM1196 697h1v1h-1zM1196 716h1v1h-1zM1196 734h1v1h-1zM1196 753h1v1h-1zM1196 771h1v1h-1zM1196 790h1v1h-1zM1196 808h1v1h-1zM1196 827h1v1h-1zM1196 845h1v1h-1zM1196 864h1v1h-1zM1196 882h1v1h-1zM1196 901h1v1h-1zM1215 51h1v1h-1zM1215 69h1v1h-1zM1215 88h1v1h-1zM1215 106h1v1h-1zM1215 125h1v1h-1zM1215 143h1v1h-1zM1215 162h1v1h-1zM1215 180h1v1h-1zM1215 199h1v1h-1zM1215 217h1v1h-1zM1215 236h1v1h-1zM1215 254h1v1h-1zM1215 273h1v1h-1zM1215 291h1v1h-1zM1215 310h1v1h-1zM1215 328h1v1h-1zM1215 347h1v1h-1zM1215 365h1v1h-1zM1215 383h1v1h-1zM1215 402h1v1h-1zM1215 420h1v1h-1zM1215 439h1v1h-1zM1215 457h1v1h-1zM1215 476h1v1h-1zM1215 494h1v1h-1zM1215 513h1v1h-1zM1215 531h1v1h-1zM1215 550h1v1h-1zM1215 568h1v1h-1zM1215 587h1v1h-1zM1215 605h1v1h-1zM1215 624h1v1h-1zM1215 642h1v1h-1zM1215 661h1v1h-1zM1215 679h1v1h-1zM1215 697h1v1h-1zM1215 716h1v1h-1zM1215 734h1v1h-1zM1215 753h1v1h-1zM1215 771h1v1h-1zM1215 790h1v1h-1zM1215 808h1v1h-1zM1215 827h1v1h-1zM1215 845h1v1h-1zM1215 864h1v1h-1zM1215 882h1v1h-1zM1215 901h1v1h-1zM1233 51h1v1h-1zM1233 69h1v1h-1zM1233 88h1v1h-1zM1233 106h1v1h-1zM1233 125h1v1h-1zM1233 143h1v1h-1zM1233 162h1v1h-1zM1233 180h1v1h-1zM1233 199h1v1h-1zM1233 217h1v1h-1zM1233 236h1v1h-1zM1233 254h1v1h-1zM1233 273h1v1h-1zM1233 291h1v1h-1zM1233 310h1v1h-1zM1233 328h1v1h-1zM1233 347h1v1h-1zM1233 365h1v1h-1zM1233 383h1v1h-1zM1233 402h1v1h-1zM1233 420h1v1h-1zM1233 439h1v1h-1zM1233 457h1v1h-1zM1233 476h1v1h-1zM1233 494h1v1h-1zM1233 513h1v1h-1zM1233 531h1v1h-1zM1233 550h1v1h-1zM1233 568h1v1h-1zM1233 587h1v1h-1zM1233 605h1v1h-1zM1233 624h1v1h-1zM1233 642h1v1h-1zM1233 661h1v1h-1zM1233 679h1v1h-1zM1233 697h1v1h-1zM1233 716h1v1h-1zM1233 734h1v1h-1zM1233 753h1v1h-1zM1233 771h1v1h-1zM1233 790h1v1h-1zM1233 808h1v1h-1zM1233 827h1v1h-1zM1233 845h1v1h-1zM1233 864h1v1h-1zM1233 882h1v1h-1zM1233 901h1v1h-1zM1252 51h1v1h-1zM1252 69h1v1h-1zM1252 88h1v1h-1zM1252 106h1v1h-1zM1252 125h1v1h-1zM1252 143h1v1h-1zM1252 162h1v1h-1zM1252 180h1v1h-1zM1252 199h1v1h-1zM1252 217h1v1h-1zM1252 236h1v1h-1zM1252 254h1v1h-1zM1252 273h1v1h-1zM1252 291h1v1h-1zM1252 310h1v1h-1zM1252 328h1v1h-1zM1252 347h1v1h-1zM1252 365h1v1h-1zM1252 383h1v1h-1zM1252 402h1v1h-1zM1252 420h1v1h-1zM1252 439h1v1h-1zM1252 457h1v1h-1zM1252 476h1v1h-1zM1252 494h1v1h-1zM1252 513h1v1h-1zM1252 531h1v1h-1zM1252 550h1v1h-1zM1252 568h1v1h-1zM1252 587h1v1h-1zM1252 605h1v1h-1zM1252 624h1v1h-1zM1252 642h1v1h-1zM1252 661h1v1h-1zM1252 679h1v1h-1zM1252 697h1v1h-1zM1252 716h1v1h-1zM1252 734h1v1h-1zM1252 753h1v1h-1zM1252 771h1v1h-1zM1252 790h1v1h-1zM1252 808h1v1h-1zM1252 827h1v1h-1zM1252 845h1v1h-1zM1252 864h1v1h-1zM1252 882h1v1h-1zM1252 901h1v1h-1z" fill="#a8a8a8"/>
<path d="M273 263h154v1h-154zM461 263h367v1h-367zM273 263h1v45h-1zM273 312h1v45h-1zM263 307h20v1h-20zM263 312h20v1h-20zM273 356h47v1h-47zM319 263h1v26h-1zM319 321h1v331h-1zM384 263h1v26h-1zM384 321h1v194h-1zM384 356h43v1h-43zM461 356h37v1h-37zM513 263h1v85h-1zM501 347h24v1h-24zM501 349h24v1h-24zM501 347h1v3h-1zM524 347h1v3h-1zM501 356h6v1h-6zM511 356h5v1h-5zM520 356h5v1h-5zM529 356h6v1h-6zM499 363h29v1h-29zM497 365h32v1h-32zM494 367h1v181h-1zM494 581h1v99h-1zM484 679h22v1h-22zM642 263h1v46h-1zM639 315h8v1h-8zM642 312h1v8h-1zM639 331h8v1h-8zM642 336h1v39h-1zM632 374h22v1h-22zM827 263h1v26h-1zM827 321h1v119h-1zM827 347h63v1h-63zM889 337h1v20h-1zM894 337h1v20h-1zM894 347h257v1h-257zM938 300h1v48h-1zM984 347h1v65h-1zM1048 347h1v28h-1zM1104 347h1v35h-1zM1095 381h19v1h-19zM1095 386h19v1h-19zM1104 386h1v41h-1zM1104 461h1v7h-1zM1150 347h1v63h-1zM1141 409h19v1h-19zM1141 413h19v1h-19zM1150 413h1v106h-1zM1150 553h1v127h-1zM1140 679h22v1h-22zM975 467h231v1h-231zM975 440h1v28h-1zM1039 411h66v1h-66zM1039 403h1v9h-1zM966 405h1v7h-1zM1030 368h1v7h-1zM494 439h16v1h-16zM544 439h32v1h-32zM575 430h1v19h-1zM580 430h1v19h-1zM580 439h53v1h-53zM605 411h1v29h-1zM605 457h28v1h-28zM605 457h1v58h-1zM662 448h79v1h-79zM775 448h37v1h-37zM716 393h1v56h-1zM679 448h1v99h-1zM679 581h1v71h-1zM815 439h24v1h-24zM815 441h24v1h-24zM815 439h1v3h-1zM838 439h1v3h-1zM815 448h6v1h-6zM825 448h5v1h-5zM834 448h5v1h-5zM843 448h6v1h-6zM813 455h29v1h-29zM811 457h32v1h-32zM808 460h1v35h-1zM771 494h66v1h-66zM771 494h1v36h-1zM762 529h20v1h-20zM762 534h20v1h-20zM771 534h1v32h-1zM771 599h1v53h-1zM836 494h1v72h-1zM836 599h1v53h-1zM319 651h453v1h-453zM836 651h156v1h-156zM1021 651h130v1h-130zM995 651h8v1h-8zM999 648h1v8h-1zM1014 648h1v8h-1zM70 522h1v36h-1zM66 565h8v1h-8zM70 561h1v8h-1zM66 580h8v1h-8zM70 587h1v56h-1zM60 642h22v1h-22zM70 522h64v1h-64zM162 513h75v1h-75zM162 531h75v1h-75z" fill="#00ff00"/>
<path d="M426.50,263.50 L429.50,259.50 L435.50,268.50 L441.50,259.50 L446.50,268.50 L452.50,259.50 L458.50,268.50 L461.50,263.50M319.50,288.50 L324.50,291.50 L314.50,296.50 L324.50,302.50 L314.50,308.50 L324.50,314.50 L314.50,319.50 L319.50,321.50M384.50,288.50 L388.50,291.50 L379.50,296.50 L388.50,302.50 L379.50,308.50 L388.50,314.50 L379.50,319.50 L384.50,321.50M426.50,356.50 L429.50,351.50 L435.50,360.50 L441.50,351.50 L446.50,360.50 L452.50,351.50 L458.50,360.50 L461.50,356.50M527.50,363.50 L531.50,367.50M498.50,363.50 L496.50,365.50M496.50,365.50 L494.50,367.50M494.50,546.50 L499.50,549.50 L490.50,555.50 L499.50,561.50 L490.50,566.50 L499.50,572.50 L490.50,578.50 L494.50,581.50M484.50,679.50 L494.50,690.50 L505.50,679.50M632.50,374.50 L642.50,385.50 L653.50,374.50M827.50,288.50 L831.50,291.50 L822.50,296.50 L831.50,302.50 L822.50,308.50 L831.50,314.50 L822.50,319.50 L827.50,321.50M1104.50,426.50 L1108.50,429.50 L1099.50,435.50 L1108.50,441.50 L1099.50,446.50 L1108.50,452.50 L1099.50,458.50 L1104.50,461.50M1150.50,518.50 L1155.50,521.50 L1145.50,527.50 L1155.50,533.50 L1145.50,539.50 L1155.50,545.50 L1145.50,550.50 L1150.50,553.50M1140.50,679.50 L1150.50,690.50 L1161.50,679.50M976.00,435.50 L982.50,415.50M1040.00,398.50 L1046.50,378.50M509.50,439.50 L512.50,434.50 L518.50,444.50 L524.50,434.50 L530.50,444.50 L535.50,434.50 L541.50,444.50 L544.50,439.50M637.50,441.00 L657.00,447.50M740.50,448.50 L743.50,444.50 L749.50,453.50 L755.50,444.50 L760.50,453.50 L766.50,444.50 L772.50,453.50 L775.50,448.50M679.50,546.50 L684.50,549.50 L674.50,555.50 L684.50,561.50 L674.50,566.50 L684.50,572.50 L674.50,578.50 L679.50,581.50M841.50,455.50 L845.50,460.50M812.50,455.50 L810.50,457.50M810.50,457.50 L808.50,460.50M771.50,565.50 L776.50,568.50 L767.50,573.50 L776.50,579.50 L767.50,585.50 L776.50,591.50 L767.50,596.50 L771.50,599.50M836.50,565.50 L841.50,568.50 L831.50,573.50 L841.50,579.50 L831.50,585.50 L841.50,591.50 L831.50,596.50 L836.50,599.50M376.50,554.50 L376.50,520.50 L384.50,513.50 L392.50,520.50 L392.50,554.50 L376.50,554.50M597.50,554.50 L597.50,520.50 L605.50,513.50 L613.50,520.50 L613.50,554.50 L597.50,554.50M236.50,505.50 L270.50,505.50 L277.50,513.50 L270.50,521.50 L236.50,521.50 L236.50,505.50M236.50,523.50 L270.50,523.50 L277.50,531.50 L270.50,539.50 L236.50,539.50 L236.50,523.50M60.50,642.50 L70.50,653.50 L81.50,642.50M137.50,521.50 L157.00,514.50" fill="none" stroke="#00ff00" stroke-width="1" stroke-linejoin="miter" shape-rendering="crispEdges"/>
<line x1="967.0" y1="416.0" x2="973.5" y2="435.0" stroke="#00ff00" stroke-width="1" stroke-dasharray="3 3" shape-rendering="crispEdges"/>
<line x1="1031.5" y1="379.0" x2="1037.5" y2="398.0" stroke="#00ff00" stroke-width="1" stroke-dasharray="3 3" shape-rendering="crispEdges"/>
<line x1="637.5" y1="456.0" x2="656.5" y2="450.0" stroke="#00ff00" stroke-width="1" stroke-dasharray="3 3" shape-rendering="crispEdges"/>
<line x1="138.0" y1="524.0" x2="157.0" y2="530.0" stroke="#00ff00" stroke-width="1" stroke-dasharray="3 3" shape-rendering="crispEdges"/>
<circle cx="513.0" cy="356.0" r="27.5" fill="none" stroke="#00ff00" stroke-width="1" shape-rendering="crispEdges"/>
<circle cx="642.0" cy="322.5" r="14.3" fill="none" stroke="#00ff00" stroke-width="1" shape-rendering="crispEdges"/>
<circle cx="966.0" cy="413.5" r="2.4" fill="none" stroke="#00ff00" stroke-width="1"/>
<circle cx="983.5" cy="413.5" r="2.4" fill="none" stroke="#00ff00" stroke-width="1"/>
<circle cx="975.0" cy="437.5" r="2.4" fill="none" stroke="#00ff00" stroke-width="1"/>
<circle cx="1030.5" cy="376.5" r="2.4" fill="none" stroke="#00ff00" stroke-width="1"/>
<circle cx="1047.5" cy="376.5" r="2.4" fill="none" stroke="#00ff00" stroke-width="1"/>
<circle cx="1039.0" cy="400.5" r="2.4" fill="none" stroke="#00ff00" stroke-width="1"/>
<circle cx="635.0" cy="440.0" r="2.4" fill="none" stroke="#00ff00" stroke-width="1"/>
<circle cx="635.0" cy="457.5" r="2.4" fill="none" stroke="#00ff00" stroke-width="1"/>
<circle cx="659.5" cy="448.5" r="2.4" fill="none" stroke="#00ff00" stroke-width="1"/>
<circle cx="827.0" cy="448.0" r="27.5" fill="none" stroke="#00ff00" stroke-width="1" shape-rendering="crispEdges"/>
<circle cx="1006.0" cy="651.5" r="14.4" fill="none" stroke="#00ff00" stroke-width="1" shape-rendering="crispEdges"/>
<circle cx="70.0" cy="572.0" r="14.5" fill="none" stroke="#00ff00" stroke-width="1" shape-rendering="crispEdges"/>
<circle cx="135.5" cy="522.5" r="2.4" fill="none" stroke="#00ff00" stroke-width="1"/>
<circle cx="159.5" cy="513.5" r="2.4" fill="none" stroke="#00ff00" stroke-width="1"/>
<circle cx="159.5" cy="531.5" r="2.4" fill="none" stroke="#00ff00" stroke-width="1"/>
<rect x="964.5" y="400.5" width="4" height="4" fill="none" stroke="#ff0000" stroke-width="1"/>
<rect x="1028.5" y="363.5" width="4" height="4" fill="none" stroke="#ff0000" stroke-width="1"/>
<path d="M317 261h5v5h-5zM382 261h5v5h-5zM511 261h5v5h-5zM640 261h5v5h-5zM317 354h5v5h-5zM382 354h5v5h-5zM825 345h5v5h-5zM936 345h5v5h-5zM982 345h5v5h-5zM1046 345h5v5h-5zM1102 345h5v5h-5zM1102 409h5v5h-5zM1102 465h5v5h-5zM1148 465h5v5h-5zM1148 649h5v5h-5zM492 437h5v5h-5zM603 437h5v5h-5zM677 446h5v5h-5zM714 446h5v5h-5zM806 492h5v5h-5zM492 649h5v5h-5zM677 649h5v5h-5z" fill="#00ffff"/>
<text transform="translate(12.89,259.00) scale(1.1111,1)" font-family="Liberation Sans" font-weight="bold" font-size="13" fill="#00ffff" stroke="#00ffff" stroke-width="0.3" xml:space="preserve">.op</text>
<text transform="translate(12.88,273.00) scale(1.1250,1)" font-family="Liberation Sans" font-weight="bold" font-size="13" fill="#00ffff" stroke="#00ffff" stroke-width="0.3" xml:space="preserve">.tran 25m</text>
<text transform="translate(12.95,292.00) scale(1.0536,1)" font-family="Liberation Sans" font-weight="bold" font-size="13" fill="#ffff00" stroke="#ffff00" stroke-width="0.3" xml:space="preserve">.lib 12AX7.TSi4.txt</text>
<text transform="translate(12.94,309.50) scale(1.0550,1)" font-family="Liberation Sans" font-weight="bold" font-size="13" fill="#ffff00" stroke="#ffff00" stroke-width="0.3" xml:space="preserve">.ac dec 10ms 1 7k</text>
<text transform="translate(12.93,328.00) scale(1.0682,1)" font-family="Liberation Sans" font-weight="bold" font-size="13" fill="#00ffff" stroke="#00ffff" stroke-width="0.3" xml:space="preserve">.step param RA list 100k 220k 470k</text>
<text transform="translate(12.90,342.00) scale(1.1028,1)" font-family="Liberation Sans" font-weight="bold" font-size="13" fill="#ffff00" stroke="#ffff00" stroke-width="0.3" xml:space="preserve">.param RA = 120k</text>
<text transform="translate(12.93,370.00) scale(1.0684,1)" font-family="Liberation Sans" font-weight="bold" font-size="13" fill="#00ffff" stroke="#00ffff" stroke-width="0.3" xml:space="preserve">.step param R 5meg 1r 500k</text>
<text transform="translate(12.91,383.50) scale(1.0869,1)" font-family="Liberation Sans" font-weight="bold" font-size="13" fill="#ffff00" stroke="#ffff00" stroke-width="0.3" xml:space="preserve">.param R= 5meg</text>
<text transform="translate(12.93,407.00) scale(1.0654,1)" font-family="Liberation Sans" font-weight="bold" font-size="13" fill="#00ffff" stroke="#00ffff" stroke-width="0.3" xml:space="preserve">.step param CX 250n 2u 250n</text>
<text transform="translate(12.92,425.00) scale(1.0837,1)" font-family="Liberation Sans" font-weight="bold" font-size="13" fill="#ffff00" stroke="#ffff00" stroke-width="0.3" xml:space="preserve">.param CX= 680n</text>
<text transform="translate(12.94,453.00) scale(1.0599,1)" font-family="Liberation Sans" font-weight="bold" font-size="13" fill="#ffff00" stroke="#ffff00" stroke-width="0.3" xml:space="preserve">.step param RX 1m 150k 1k</text>
<text transform="translate(12.91,472.00) scale(1.0888,1)" font-family="Liberation Sans" font-weight="bold" font-size="13" fill="#00ffff" stroke="#00ffff" stroke-width="0.3" xml:space="preserve">.param RX= 1k</text>
<text transform="translate(277.00,301.00) scale(0.9529,1)" font-family="Liberation Sans" font-weight="bold" font-size="13" fill="#ffffff" stroke="#ffffff" stroke-width="0.3" xml:space="preserve">C5</text>
<text transform="translate(277.70,327.60) scale(1.0591,1)" font-family="Liberation Sans" font-weight="bold" font-size="13" fill="#ffffff" stroke="#ffffff" stroke-width="0.3" xml:space="preserve">10μ</text>
<text transform="translate(329.16,301.00) scale(1.0437,1)" font-family="Liberation Sans" font-weight="bold" font-size="13" fill="#ffffff" stroke="#ffffff" stroke-width="0.3" xml:space="preserve">R9</text>
<text transform="translate(330.70,322.00) scale(1.0448,1)" font-family="Liberation Sans" font-weight="bold" font-size="13" fill="#ffffff" stroke="#ffffff" stroke-width="0.3" xml:space="preserve">100k</text>
<text transform="translate(393.94,300.50) scale(1.0625,1)" font-family="Liberation Sans" font-weight="bold" font-size="13" fill="#ffffff" stroke="#ffffff" stroke-width="0.3" xml:space="preserve">R8</text>
<text transform="translate(395.40,322.00) scale(1.0364,1)" font-family="Liberation Sans" font-weight="bold" font-size="13" fill="#ffffff" stroke="#ffffff" stroke-width="0.3" xml:space="preserve">1Meg</text>
<text transform="translate(434.76,256.00) scale(0.9438,1)" font-family="Liberation Sans" font-weight="bold" font-size="13" fill="#ffffff" stroke="#ffffff" stroke-width="0.3" xml:space="preserve">R7</text>
<text transform="translate(428.70,281.00) scale(1.0448,1)" font-family="Liberation Sans" font-weight="bold" font-size="13" fill="#ffffff" stroke="#ffffff" stroke-width="0.3" xml:space="preserve">100k</text>
<text transform="translate(430.24,348.00) scale(1.0609,1)" font-family="Liberation Sans" font-weight="bold" font-size="13" fill="#ffffff" stroke="#ffffff" stroke-width="0.3" xml:space="preserve">R10</text>
<text transform="translate(427.00,373.00) scale(1.0273,1)" font-family="Liberation Sans" font-weight="bold" font-size="13" fill="#ffffff" stroke="#ffffff" stroke-width="0.3" xml:space="preserve">1Meg</text>
<text transform="translate(655.90,305.00) scale(1.1235,1)" font-family="Liberation Sans" font-weight="bold" font-size="13" fill="#ffffff" stroke="#ffffff" stroke-width="0.3" xml:space="preserve">VA</text>
<text transform="translate(656.40,352.00) scale(1.0897,1)" font-family="Liberation Sans" font-weight="bold" font-size="13" fill="#ffffff" stroke="#ffffff" stroke-width="0.3" xml:space="preserve">345v</text>
<text transform="translate(787.24,299.00) scale(1.0563,1)" font-family="Liberation Sans" font-weight="bold" font-size="13" fill="#ffffff" stroke="#ffffff" stroke-width="0.3" xml:space="preserve">R3</text>
<text transform="translate(778.30,318.00) scale(1.1207,1)" font-family="Liberation Sans" font-weight="bold" font-size="13" fill="#ffffff" stroke="#ffffff" stroke-width="0.3" xml:space="preserve">{RA}</text>
<text transform="translate(882.60,334.00) scale(0.9235,1)" font-family="Liberation Sans" font-weight="bold" font-size="13" fill="#ffffff" stroke="#ffffff" stroke-width="0.3" xml:space="preserve">C1</text>
<text transform="translate(879.10,369.00) scale(1.0864,1)" font-family="Liberation Sans" font-weight="bold" font-size="13" fill="#ffffff" stroke="#ffffff" stroke-width="0.3" xml:space="preserve">47n</text>
<text transform="translate(918.30,425.70) scale(1.0000,1)" font-family="Liberation Sans" font-weight="bold" font-size="13" fill="#ffffff" stroke="#ffffff" stroke-width="0.3" xml:space="preserve">SET=1</text>
<text transform="translate(988.50,392.80) scale(1.0000,1)" font-family="Liberation Sans" font-weight="bold" font-size="13" fill="#ffffff" stroke="#ffffff" stroke-width="0.3" xml:space="preserve">SET=1</text>
<text transform="translate(1062.00,379.00) scale(0.9412,1)" font-family="Liberation Sans" font-weight="bold" font-size="13" fill="#ffffff" stroke="#ffffff" stroke-width="0.3" xml:space="preserve">C3</text>
<text transform="translate(1063.60,394.80) scale(1.0346,1)" font-family="Liberation Sans" font-weight="bold" font-size="13" fill="#ffffff" stroke="#ffffff" stroke-width="0.3" xml:space="preserve">2.2n</text>
<text transform="translate(1168.60,412.80) scale(0.9000,1)" font-family="Liberation Sans" font-weight="bold" font-size="13" fill="#ffffff" stroke="#ffffff" stroke-width="0.3" xml:space="preserve">C4</text>
<text transform="translate(1170.40,427.50) scale(1.0467,1)" font-family="Liberation Sans" font-weight="bold" font-size="13" fill="#ffffff" stroke="#ffffff" stroke-width="0.3" xml:space="preserve">680p</text>
<text transform="translate(1074.38,437.00) scale(1.0250,1)" font-family="Liberation Sans" font-weight="bold" font-size="13" fill="#ffffff" stroke="#ffffff" stroke-width="0.3" xml:space="preserve">R6</text>
<text transform="translate(1069.30,457.00) scale(1.1200,1)" font-family="Liberation Sans" font-weight="bold" font-size="13" fill="#ffffff" stroke="#ffffff" stroke-width="0.3" xml:space="preserve">{R}</text>
<text transform="translate(1204.58,472.00) scale(0.9250,1)" font-family="Liberation Sans" font-weight="bold" font-size="13" fill="#ffffff" stroke="#ffffff" stroke-width="0.3" xml:space="preserve">FILTER</text>
<text transform="translate(1161.73,532.20) scale(0.9750,1)" font-family="Liberation Sans" font-weight="bold" font-size="13" fill="#ffffff" stroke="#ffffff" stroke-width="0.3" xml:space="preserve">R5</text>
<text transform="translate(1162.70,552.50) scale(1.0345,1)" font-family="Liberation Sans" font-weight="bold" font-size="13" fill="#ffffff" stroke="#ffffff" stroke-width="0.3" xml:space="preserve">250k</text>
<text transform="translate(998.40,632.60) scale(0.9500,1)" font-family="Liberation Sans" font-weight="bold" font-size="13" fill="#ffffff" stroke="#ffffff" stroke-width="0.3" xml:space="preserve">VK</text>
<text transform="translate(991.80,679.60) scale(1.1538,1)" font-family="Liberation Sans" font-weight="bold" font-size="13" fill="#ffffff" stroke="#ffffff" stroke-width="0.3" xml:space="preserve">-15v</text>
<text transform="translate(976.30,695.30) scale(1.1019,1)" font-family="Liberation Sans" font-weight="bold" font-size="13" fill="#ffffff" stroke="#ffffff" stroke-width="0.3" xml:space="preserve">Rser=1m</text>
<text transform="translate(513.21,431.00) scale(1.0909,1)" font-family="Liberation Sans" font-weight="bold" font-size="13" fill="#ffffff" stroke="#ffffff" stroke-width="0.3" xml:space="preserve">R11</text>
<text transform="translate(515.20,456.70) scale(1.0682,1)" font-family="Liberation Sans" font-weight="bold" font-size="13" fill="#ffffff" stroke="#ffffff" stroke-width="0.3" xml:space="preserve">470</text>
<text transform="translate(568.70,409.40) scale(0.9412,1)" font-family="Liberation Sans" font-weight="bold" font-size="13" fill="#ffffff" stroke="#ffffff" stroke-width="0.3" xml:space="preserve">C6</text>
<text transform="translate(560.30,424.00) scale(1.0636,1)" font-family="Liberation Sans" font-weight="bold" font-size="13" fill="#ffffff" stroke="#ffffff" stroke-width="0.3" xml:space="preserve">47n</text>
<text transform="translate(648.00,431.00) scale(1.0250,1)" font-family="Liberation Sans" font-weight="bold" font-size="13" fill="#ffffff" stroke="#ffffff" stroke-width="0.3" xml:space="preserve">SET=0</text>
<text transform="translate(748.26,440.70) scale(1.0438,1)" font-family="Liberation Sans" font-weight="bold" font-size="13" fill="#ffffff" stroke="#ffffff" stroke-width="0.3" xml:space="preserve">R2</text>
<text transform="translate(746.90,466.00) scale(1.0091,1)" font-family="Liberation Sans" font-weight="bold" font-size="13" fill="#ffffff" stroke="#ffffff" stroke-width="0.3" xml:space="preserve">22k</text>
<text transform="translate(725.00,527.70) scale(0.9235,1)" font-family="Liberation Sans" font-weight="bold" font-size="13" fill="#ffffff" stroke="#ffffff" stroke-width="0.3" xml:space="preserve">C2</text>
<text transform="translate(718.50,543.00) scale(1.0893,1)" font-family="Liberation Sans" font-weight="bold" font-size="13" fill="#ffffff" stroke="#ffffff" stroke-width="0.3" xml:space="preserve">{CX}</text>
<text transform="translate(723.54,577.60) scale(1.0609,1)" font-family="Liberation Sans" font-weight="bold" font-size="13" fill="#ffffff" stroke="#ffffff" stroke-width="0.3" xml:space="preserve">R13</text>
<text transform="translate(721.30,596.00) scale(1.1214,1)" font-family="Liberation Sans" font-weight="bold" font-size="13" fill="#ffffff" stroke="#ffffff" stroke-width="0.3" xml:space="preserve">{RX}</text>
<text transform="translate(847.38,577.60) scale(1.0250,1)" font-family="Liberation Sans" font-weight="bold" font-size="13" fill="#ffffff" stroke="#ffffff" stroke-width="0.3" xml:space="preserve">R4</text>
<text transform="translate(848.40,598.90) scale(1.0273,1)" font-family="Liberation Sans" font-weight="bold" font-size="13" fill="#ffffff" stroke="#ffffff" stroke-width="0.3" xml:space="preserve">33k</text>
<text transform="translate(505.33,559.00) scale(1.0696,1)" font-family="Liberation Sans" font-weight="bold" font-size="13" fill="#ffffff" stroke="#ffffff" stroke-width="0.3" xml:space="preserve">R12</text>
<text transform="translate(506.90,580.00) scale(1.0414,1)" font-family="Liberation Sans" font-weight="bold" font-size="13" fill="#ffffff" stroke="#ffffff" stroke-width="0.3" xml:space="preserve">100k</text>
<text transform="translate(643.38,559.40) scale(1.0250,1)" font-family="Liberation Sans" font-weight="bold" font-size="13" fill="#ffffff" stroke="#ffffff" stroke-width="0.3" xml:space="preserve">R1</text>
<text transform="translate(627.60,577.50) scale(1.0424,1)" font-family="Liberation Sans" font-weight="bold" font-size="13" fill="#ffffff" stroke="#ffffff" stroke-width="0.3" xml:space="preserve">1Meg</text>
<text transform="translate(127.10,496.00) scale(1.0225,1)" font-family="Liberation Sans" font-weight="bold" font-size="13" fill="#ffffff" stroke="#ffffff" stroke-width="0.3" xml:space="preserve">SET=0</text>
<text transform="translate(89.38,556.00) scale(1.2182,1)" font-family="Liberation Sans" font-weight="bold" font-size="13" fill="#ffffff" stroke="#ffffff" stroke-width="0.3" xml:space="preserve">IN</text>
<text transform="translate(90.60,577.20) scale(1.0312,1)" font-family="Liberation Sans" font-weight="bold" font-size="13" fill="#ffffff" stroke="#ffffff" stroke-width="0.3" xml:space="preserve">AC 1v 0</text>
<text transform="translate(80.00,604.00) scale(1.0722,1)" font-family="Liberation Sans" font-weight="bold" font-size="13" fill="#ffffff" stroke="#ffffff" stroke-width="0.3" xml:space="preserve">SINE(0 1v 1000)</text>
<text transform="translate(235.93,517.50) scale(1.0667,1)" font-family="Liberation Sans" font-weight="bold" font-size="13" fill="#ffffff" stroke="#ffffff" stroke-width="0.3" xml:space="preserve">IN_1</text>
<text transform="translate(235.89,535.50) scale(1.1077,1)" font-family="Liberation Sans" font-weight="bold" font-size="13" fill="#ffffff" stroke="#ffffff" stroke-width="0.3" xml:space="preserve">IN_2</text>
<text transform="translate(517.00,321.00) scale(0.9000,1)" font-family="Liberation Sans" font-weight="bold" font-size="6" fill="#ffffff" stroke="#ffffff" stroke-width="0" xml:space="preserve">U1</text>
<text transform="translate(499.00,394.80) scale(0.8606,1)" font-family="Liberation Sans" font-weight="bold" font-size="6" fill="#ffffff" stroke="#ffffff" stroke-width="0" xml:space="preserve">12AX7.TSi4</text>
<text transform="translate(830.90,412.80) scale(0.9125,1)" font-family="Liberation Sans" font-weight="bold" font-size="6" fill="#ffffff" stroke="#ffffff" stroke-width="0" xml:space="preserve">U4</text>
<text transform="translate(813.20,487.00) scale(0.8424,1)" font-family="Liberation Sans" font-weight="bold" font-size="6" fill="#ffffff" stroke="#ffffff" stroke-width="0" xml:space="preserve">12AX7.TSi4</text>
<text transform="translate(653.80,469.00) scale(0.9125,1)" font-family="Liberation Sans" font-weight="bold" font-size="6" fill="#ffffff" stroke="#ffffff" stroke-width="0" xml:space="preserve">U3</text>
<text transform="translate(134.40,542.00) scale(0.8625,1)" font-family="Liberation Sans" font-weight="bold" font-size="6" fill="#ffffff" stroke="#ffffff" stroke-width="0" xml:space="preserve">U2</text>
<text transform="translate(610.60,411.00) rotate(-90) scale(1.0435,1)" font-family="Liberation Sans" font-weight="bold" font-size="13" fill="#ffffff" stroke="#ffffff" stroke-width="0.3" xml:space="preserve">Vx1</text>
<text transform="translate(721.70,393.00) rotate(-90) scale(1.0565,1)" font-family="Liberation Sans" font-weight="bold" font-size="13" fill="#ffffff" stroke="#ffffff" stroke-width="0.3" xml:space="preserve">Vx2</text>
<text transform="translate(943.80,300.40) rotate(-90) scale(1.0565,1)" font-family="Liberation Sans" font-weight="bold" font-size="13" fill="#ffffff" stroke="#ffffff" stroke-width="0.3" xml:space="preserve">Vx3</text>
<text transform="translate(389.40,554.15) rotate(-90) scale(1.1481,1)" font-family="Liberation Sans" font-weight="bold" font-size="13" fill="#ffffff" stroke="#ffffff" stroke-width="0.3" xml:space="preserve">IN_1</text>
<text transform="translate(610.40,554.19) rotate(-90) scale(1.1923,1)" font-family="Liberation Sans" font-weight="bold" font-size="13" fill="#ffffff" stroke="#ffffff" stroke-width="0.3" xml:space="preserve">IN_2</text>
<text transform="translate(952.20,399.00) rotate(-90) scale(0.9125,1)" font-family="Liberation Sans" font-weight="bold" font-size="6" fill="#ffffff" stroke="#ffffff" stroke-width="0" xml:space="preserve">U5</text>
<text transform="translate(1017.00,362.60) rotate(-90) scale(0.8500,1)" font-family="Liberation Sans" font-weight="bold" font-size="6" fill="#ffffff" stroke="#ffffff" stroke-width="0" xml:space="preserve">U6</text>
</svg>
</body></html>
